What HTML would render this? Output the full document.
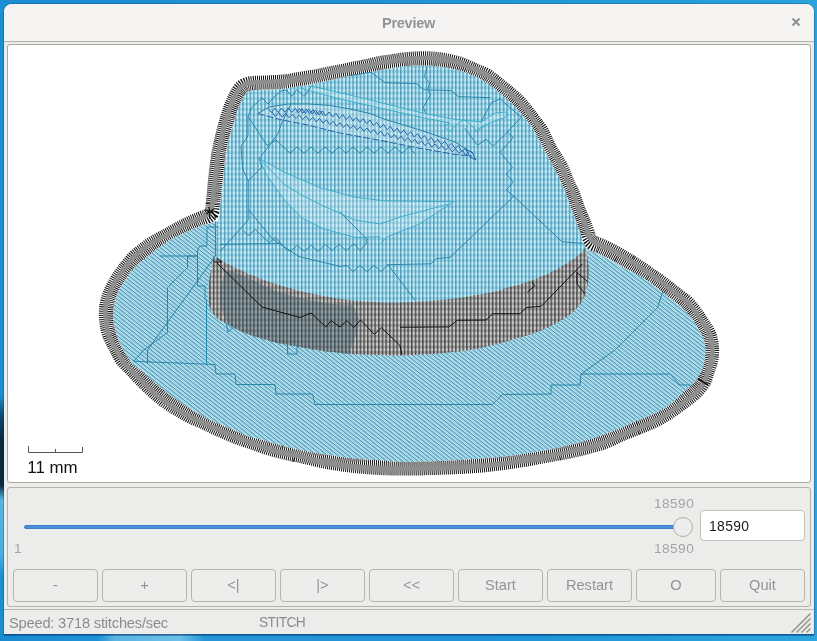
<!DOCTYPE html>
<html lang="en">
<head>
<meta charset="utf-8">
<title>Preview</title>
<style>
html,body{margin:0;padding:0;}
body{width:817px;height:641px;overflow:hidden;position:relative;background:linear-gradient(to right,#1b8dd2 0,#1f93d6 50%,#2aa2dc 100%);font-family:"Liberation Sans",sans-serif;font-size:14.6px;color:#8c8e8e;}
.abs{position:absolute;}
#deskL{left:0;top:0;width:5px;height:641px;background:linear-gradient(to bottom,#1c8fd3 0,#1c8fd3 395px,#0f4a70 415px,#0b2a40 440px,#0b2a40 485px,#56b4e0 500px,#4aaee0 555px,#1c8fd3 575px,#1c8fd3 100%);}
#deskB{left:0;top:634px;width:817px;height:7px;background:linear-gradient(to right,#1a8ad0 0,#1f92d6 12%,#58b4e2 14%,#6cc0e8 22%,#2796d8 25%,#1f93d6 60%,#2ba6df 100%);}
#deskB2{left:4px;top:634px;width:810px;height:2px;background:rgba(0,50,110,.45);}
#win{will-change:transform;left:4px;top:4px;width:810px;height:630px;background:#ececeb;border-radius:8px 8px 0 0;overflow:hidden;box-shadow:0 0 0 1px rgba(0,40,80,.25);}
#title{left:0;top:0;width:810px;height:37px;background:#f5f4f2;border-bottom:1px solid #b5b1ac;}
#title .t{position:absolute;left:0;width:809px;top:9.6px;text-align:center;font-weight:bold;font-size:14.6px;letter-spacing:-0.3px;color:#929595;line-height:18px;}
#close{position:absolute;left:786px;top:12px;width:12px;height:12px;}
#canvas{left:3px;top:40px;width:802px;height:437px;background:#fff;border:1px solid #a9a7a3;border-radius:3px;}
#panel{left:3px;top:483px;width:802px;height:118px;border:1px solid #b4b2ae;border-radius:3px;background:#ececeb;}
.btn{position:absolute;top:565px;height:31px;width:83px;border:1px solid #b6b4b0;border-radius:4px;background:#ededec;text-align:center;line-height:31px;color:#929595;font-size:14.6px;}
#track{left:20px;top:520.5px;width:660px;height:2px;background:#4a90d9;border:1px solid #3b7fc8;border-radius:3px;}
#thumb{left:669px;top:513px;width:18px;height:18px;border-radius:50%;background:#ededec;border:1px solid #aeaca8;}
.lbl{position:absolute;color:#a3a5a5;font-size:13.7px;letter-spacing:0.42px;line-height:16px;}
#entry{left:696px;top:506px;width:103px;height:29px;border:1px solid #c3c0bb;border-radius:4px;background:#fff;color:#1a1a1a;line-height:30px;font-size:13.9px;letter-spacing:0.35px;}
#entry span{position:absolute;left:8px;top:0;}
#statsep{left:0;top:605px;width:810px;height:1px;background:#b9b7b3;}
#status{left:5px;top:610px;line-height:18px;color:#8b8d8d;font-size:14.6px;letter-spacing:-0.17px;white-space:nowrap;}
#status2{left:255px;top:610px;line-height:18px;color:#8b8d8d;font-size:13.8px;letter-spacing:-0.6px;}
svg{position:absolute;left:0;top:0;}
</style>
</head>
<body>
<div id="deskL" class="abs"></div>
<div id="deskB" class="abs"></div>
<div id="deskB2" class="abs"></div>
<div id="win" class="abs">
  <div id="title" class="abs"><div class="t">Preview</div>
    <svg id="close" viewBox="0 0 12 12" width="12" height="12"><path d="M2.5,2.5 L9.5,9.5 M9.5,2.5 L2.5,9.5" stroke="#8e9090" stroke-width="2" fill="none"/></svg>
  </div>
  <div id="canvas" class="abs"></div>
  <div id="panel" class="abs"></div>
  <div id="track" class="abs"></div>
  <div id="thumb" class="abs"></div>
  <div class="lbl" style="left:650px;top:492px;">18590</div>
  <div class="lbl" style="left:650px;top:537px;">18590</div>
  <div class="lbl" style="left:10px;top:537px;">1</div>
  <div id="entry" class="abs"><span>18590</span></div>
  <div class="btn" style="left:9px;">-</div>
  <div class="btn" style="left:98px;">+</div>
  <div class="btn" style="left:187px;">&lt;|</div>
  <div class="btn" style="left:276px;">|&gt;</div>
  <div class="btn" style="left:365px;">&lt;&lt;</div>
  <div class="btn" style="left:454px;">Start</div>
  <div class="btn" style="left:543px;">Restart</div>
  <div class="btn" style="left:632px;width:78px;">O</div>
  <div class="btn" style="left:716px;">Quit</div>
  <div id="statsep" class="abs"></div>
  <div id="status" class="abs">Speed: 3718 stitches/sec</div>
  <div id="status2" class="abs">STITCH</div>
  <svg class="abs" style="left:786px;top:608px" width="22" height="22" viewBox="0 0 22 22"><path d="M1.5,20.5 L20.5,1.5 M6.5,20.5 L20.5,6.5 M11.5,20.5 L20.5,11.5 M16.5,20.5 L20.5,16.5" stroke="#8d8d8b" stroke-width="1.4" fill="none"/></svg>
</div>
<!-- embroidery drawing, page coordinates -->
<svg id="hat" width="817" height="641" viewBox="0 0 817 641">
  <defs>
    <pattern id="grid" width="3.67" height="5.4" patternUnits="userSpaceOnUse">
      <rect width="3.67" height="5.4" fill="#c8f0fb"/>
      <rect x="0" y="0" width="3.67" height="2.7" fill="#9dd7ea"/>
      <rect x="0.3" y="0" width="1.0" height="5.4" fill="#2b7a9c"/>
    </pattern>
    <pattern id="bandp" width="3.67" height="5.4" patternUnits="userSpaceOnUse">
      <rect width="3.67" height="5.4" fill="#cecece"/>
      <rect x="0" y="0" width="3.67" height="2.7" fill="#a4a4a4"/>
      <rect x="0.3" y="0" width="1.05" height="5.4" fill="#1a1a1a"/>
    </pattern>
    <pattern id="chk" width="2" height="2" patternUnits="userSpaceOnUse">
      <rect width="2" height="2" fill="#c0ecf8"/>
      <rect x="0" y="0" width="1" height="1" fill="#96cee2"/>
      <rect x="1" y="1" width="1" height="1" fill="#96cee2"/>
    </pattern>
    <pattern id="hatch" width="3.2" height="3.2" patternUnits="userSpaceOnUse" patternTransform="rotate(38)">
      <rect x="0" y="0" width="3.2" height="0.95" fill="#32789b" fill-opacity="0.75"/>
    </pattern>
    <clipPath id="ringclip"><path d="M205.0,209.0 205.1,208.5 205.2,208.1 205.3,207.4 205.4,206.5 205.6,205.1 205.8,203.0 206.1,200.2 206.4,196.7 206.8,192.7 207.2,188.4 207.6,184.1 208.0,180.0 208.4,175.9 208.9,171.5 209.4,167.1 209.9,162.8 210.5,158.7 211.0,155.0 211.5,151.7 212.1,148.7 212.7,145.9 213.3,143.3 213.9,140.7 214.5,138.0 215.1,135.3 215.8,132.7 216.4,130.1 217.1,127.6 217.8,125.0 218.5,122.5 219.2,120.0 219.9,117.4 220.6,114.9 221.4,112.4 222.2,109.9 223.0,107.5 223.9,105.1 224.8,102.7 225.8,100.3 226.8,98.0 227.7,95.8 228.8,93.8 229.8,91.8 230.8,90.0 231.8,88.2 232.9,86.6 234.0,85.1 235.0,83.8 236.0,82.6 237.0,81.6 238.0,80.8 239.0,80.0 240.1,79.4 241.2,78.8 242.5,78.2 243.8,77.7 245.2,77.2 246.7,76.9 248.3,76.5 250.0,76.2 251.9,76.0 253.9,75.9 256.0,75.8 258.2,75.7 260.4,75.7 262.5,75.6 264.6,75.5 266.6,75.4 268.7,75.3 270.8,75.2 272.9,75.1 275.0,75.0 277.1,74.9 279.2,74.7 281.4,74.6 283.5,74.4 285.7,74.2 288.0,73.9 290.4,73.5 292.8,73.1 295.3,72.6 297.8,72.1 300.2,71.7 302.5,71.2 304.7,70.9 306.8,70.6 308.9,70.3 310.9,70.0 312.9,69.7 315.0,69.3 317.1,68.9 319.2,68.4 321.2,68.0 323.3,67.5 325.4,67.0 327.5,66.6 329.6,66.2 331.7,65.8 333.8,65.4 335.8,65.1 337.9,64.7 340.0,64.3 342.1,63.9 344.2,63.4 346.2,63.0 348.3,62.5 350.4,62.0 352.5,61.6 354.6,61.2 356.7,60.8 358.8,60.4 360.8,60.0 362.9,59.6 365.0,59.2 367.1,58.7 369.2,58.2 371.2,57.7 373.3,57.2 375.4,56.7 377.5,56.2 379.6,55.9 381.7,55.6 383.8,55.3 385.8,55.0 387.9,54.7 390.0,54.4 392.1,54.1 394.2,53.7 396.2,53.4 398.3,53.1 400.4,52.8 402.5,52.5 404.6,52.3 406.7,52.1 408.8,51.9 410.8,51.7 412.9,51.6 415.0,51.5 417.1,51.4 419.2,51.3 421.2,51.2 423.3,51.2 425.4,51.2 427.5,51.2 429.6,51.3 431.7,51.4 433.8,51.6 435.8,51.8 437.9,52.0 440.0,52.2 442.1,52.5 444.2,52.8 446.2,53.2 448.3,53.5 450.4,53.9 452.5,54.4 454.6,54.9 456.6,55.4 458.7,56.0 460.8,56.6 462.9,57.3 465.0,58.1 467.2,59.0 469.5,59.9 471.8,61.0 474.1,62.0 476.4,63.0 478.5,64.0 480.6,64.9 482.5,65.6 484.5,66.4 486.4,67.2 488.2,68.0 490.0,69.0 491.7,70.1 493.4,71.2 495.0,72.5 496.6,73.7 498.2,75.0 499.8,76.3 501.4,77.6 503.1,78.9 504.7,80.2 506.3,81.5 508.0,82.9 509.6,84.2 511.3,85.6 513.0,87.0 514.6,88.4 516.3,89.8 517.9,91.2 519.4,92.5 520.8,93.8 522.0,95.0 523.2,96.2 524.4,97.4 525.6,98.6 526.8,100.0 528.1,101.5 529.4,103.1 530.7,104.8 532.0,106.4 533.3,108.1 534.6,109.8 535.9,111.4 537.1,113.1 538.4,114.8 539.6,116.4 540.8,118.0 542.0,119.6 543.1,121.0 544.1,122.3 545.1,123.6 546.2,124.9 547.2,126.5 548.3,128.4 549.5,130.8 550.7,133.5 552.0,136.5 553.3,139.4 554.6,142.2 555.8,144.7 556.9,146.8 558.1,148.6 559.2,150.2 560.2,151.8 561.3,153.4 562.3,155.0 563.3,156.7 564.3,158.3 565.3,159.9 566.3,161.5 567.2,163.2 568.1,165.0 569.0,166.9 569.8,169.0 570.6,171.1 571.4,173.3 572.2,175.3 573.0,177.2 573.8,179.1 574.6,180.8 575.4,182.5 576.1,184.1 576.8,185.6 577.5,187.0 578.1,188.2 578.5,189.2 579.0,190.0 579.4,190.9 579.9,192.0 580.4,193.4 581.0,195.1 581.6,197.1 582.3,199.2 583.0,201.5 583.8,203.7 584.6,206.0 585.5,208.3 586.5,210.6 587.5,213.0 588.6,215.4 589.6,217.8 590.5,220.0 591.4,222.2 592.2,224.5 593.1,226.7 593.8,228.7 594.5,230.5 595.0,232.0 595.3,233.1 595.5,234.0 595.6,234.6 595.6,235.0 595.6,235.3 595.6,235.6 596.7,236.1 598.3,236.7 600.1,237.4 602.2,238.2 604.2,239.1 606.2,240.0 608.2,240.9 610.3,241.9 612.4,242.9 614.5,244.0 616.7,245.1 618.8,246.2 620.8,247.4 622.9,248.6 624.9,249.8 626.9,251.0 629.0,252.3 631.0,253.5 633.0,254.7 635.0,255.9 637.0,257.2 639.0,258.4 641.0,259.7 643.0,261.0 645.0,262.3 647.0,263.7 649.0,265.1 651.0,266.5 653.0,268.0 655.0,269.4 657.1,270.8 659.1,272.2 661.2,273.6 663.3,275.1 665.4,276.6 667.5,278.1 669.6,279.7 671.7,281.3 673.8,283.0 675.8,284.7 677.9,286.4 680.0,288.1 682.1,289.7 684.3,291.3 686.5,292.9 688.6,294.5 690.6,296.1 692.5,297.8 694.2,299.5 695.8,301.4 697.3,303.2 698.7,305.0 700.0,306.8 701.2,308.4 702.3,309.9 703.3,311.3 704.1,312.6 704.9,313.9 705.7,315.1 706.5,316.4 707.3,317.6 708.1,318.8 708.9,320.0 709.7,321.1 710.5,322.3 711.2,323.5 712.0,324.7 712.8,326.0 713.6,327.3 714.3,328.6 715.0,329.9 715.6,331.2 716.1,332.7 716.6,334.1 717.1,335.6 717.4,337.0 717.8,338.5 718.1,340.0 718.4,341.5 718.6,342.9 718.8,344.4 718.9,345.8 719.0,347.3 719.1,348.8 719.1,350.2 719.1,351.7 719.1,353.1 719.0,354.6 718.9,356.0 718.8,357.5 718.5,359.0 718.3,360.4 718.0,361.9 717.7,363.3 717.3,364.8 716.9,366.2 716.5,367.7 715.9,369.1 715.4,370.6 714.9,372.0 714.3,373.5 713.8,375.0 713.2,376.6 712.8,378.2 712.3,379.8 711.8,381.4 711.2,383.0 710.5,384.5 709.7,385.9 708.8,387.3 707.9,388.7 706.9,390.0 705.9,391.3 705.0,392.5 704.1,393.6 703.2,394.7 702.3,395.7 701.4,396.7 700.4,397.6 699.4,398.6 698.3,399.6 697.1,400.6 695.8,401.6 694.5,402.6 693.2,403.5 692.0,404.5 690.8,405.4 689.8,406.2 688.7,407.1 687.5,407.9 686.2,408.9 684.7,410.0 682.9,411.3 680.9,412.8 678.7,414.4 676.4,416.0 674.2,417.6 672.0,419.0 669.9,420.3 667.7,421.6 665.6,422.9 663.5,424.1 661.5,425.2 659.6,426.2 657.8,427.1 656.2,427.9 654.7,428.5 653.1,429.2 651.6,429.8 650.0,430.5 648.4,431.2 646.9,431.8 645.3,432.4 643.7,433.0 642.0,433.7 640.0,434.5 637.8,435.4 635.3,436.4 632.7,437.4 630.0,438.4 627.4,439.5 625.0,440.5 622.8,441.5 620.6,442.6 618.6,443.6 616.6,444.6 614.6,445.6 612.5,446.5 610.6,447.3 608.8,448.0 607.0,448.7 605.1,449.4 602.8,450.2 600.0,451.0 596.6,452.0 592.6,453.1 588.3,454.2 583.8,455.4 579.3,456.5 575.0,457.5 570.8,458.4 566.7,459.2 562.5,460.0 558.3,460.7 554.2,461.5 550.0,462.2 545.8,463.0 541.7,463.8 537.5,464.6 533.3,465.4 529.2,466.2 525.0,466.9 520.8,467.6 516.7,468.2 512.5,468.8 508.3,469.4 504.2,470.0 500.0,470.5 495.8,471.0 491.7,471.5 487.5,471.9 483.3,472.4 479.2,472.8 475.0,473.1 470.8,473.4 466.7,473.6 462.5,473.9 458.3,474.0 454.2,474.2 450.0,474.4 445.8,474.6 441.7,474.7 437.5,474.9 433.3,475.0 429.2,475.1 425.0,475.2 420.8,475.4 416.7,475.4 412.5,475.5 408.3,475.6 404.2,475.6 400.0,475.6 395.8,475.5 391.7,475.5 387.5,475.3 383.3,475.2 379.2,475.0 375.0,474.8 370.8,474.5 366.7,474.2 362.5,473.8 358.3,473.4 354.2,473.0 350.0,472.5 345.8,472.0 341.7,471.4 337.5,470.8 333.3,470.2 329.2,469.5 325.0,468.8 320.7,467.9 316.2,466.9 311.7,465.8 307.4,464.8 303.4,463.9 300.0,463.1 297.2,462.5 294.9,462.1 293.0,461.7 291.2,461.4 289.4,461.0 287.5,460.6 285.4,460.1 283.3,459.6 281.2,459.1 279.2,458.6 277.1,458.1 275.0,457.5 272.9,456.9 270.8,456.3 268.8,455.7 266.7,455.1 264.6,454.4 262.5,453.8 260.4,453.0 258.3,452.3 256.2,451.5 254.2,450.8 252.1,450.0 250.0,449.2 247.9,448.5 245.8,447.8 243.8,447.2 241.7,446.5 239.6,445.7 237.5,445.0 235.4,444.2 233.3,443.4 231.2,442.6 229.2,441.7 227.1,440.9 225.0,440.0 222.9,439.1 220.8,438.2 218.8,437.3 216.7,436.4 214.6,435.5 212.5,434.5 210.4,433.5 208.3,432.5 206.2,431.5 204.2,430.5 202.1,429.5 200.0,428.5 197.9,427.6 195.8,426.7 193.8,425.8 191.7,424.9 189.6,424.0 187.5,423.0 185.4,421.9 183.4,420.9 181.3,419.7 179.3,418.5 177.2,417.3 175.0,416.0 172.7,414.6 170.4,413.2 168.0,411.7 165.6,410.2 163.3,408.6 161.0,407.0 158.8,405.4 156.8,403.8 154.7,402.1 152.7,400.4 150.6,398.6 148.5,396.7 146.3,394.6 143.9,392.4 141.6,390.2 139.3,387.9 137.1,385.7 135.0,383.6 133.1,381.7 131.4,379.8 129.7,378.1 128.1,376.3 126.6,374.7 125.0,373.0 123.5,371.4 121.9,370.0 120.5,368.6 119.0,367.1 117.6,365.5 116.2,363.8 114.9,361.7 113.7,359.5 112.4,357.2 111.3,354.8 110.1,352.5 109.0,350.3 107.9,348.2 106.8,346.2 105.8,344.2 104.8,342.3 103.9,340.5 103.1,338.8 102.5,337.1 102.0,335.7 101.6,334.3 101.2,332.9 100.9,331.5 100.6,330.0 100.3,328.4 99.9,326.7 99.7,325.0 99.4,323.3 99.2,321.6 99.0,320.0 98.9,318.5 98.8,317.0 98.7,315.6 98.7,314.2 98.7,312.8 98.8,311.2 98.9,309.7 99.0,308.0 99.2,306.3 99.4,304.6 99.7,302.9 100.0,301.2 100.4,299.6 100.8,298.0 101.3,296.3 101.8,294.7 102.4,293.0 103.1,291.2 103.8,289.4 104.7,287.6 105.6,285.7 106.5,283.8 107.5,281.9 108.5,280.0 109.5,278.2 110.5,276.5 111.6,274.7 112.7,273.0 114.0,271.1 115.5,269.0 117.2,266.7 119.2,264.1 121.3,261.4 123.5,258.7 125.6,256.2 127.5,254.0 129.3,252.2 130.9,250.6 132.5,249.3 134.1,248.0 135.7,246.7 137.5,245.3 139.4,243.8 141.5,242.2 143.6,240.6 145.7,239.1 147.9,237.6 150.0,236.2 152.1,235.0 154.2,233.9 156.2,232.8 158.3,231.8 160.4,230.8 162.5,229.7 164.6,228.5 166.7,227.3 168.8,226.1 170.8,224.9 172.9,223.7 175.0,222.6 177.1,221.5 179.2,220.4 181.2,219.3 183.3,218.3 185.4,217.3 187.5,216.3 189.7,215.3 191.9,214.3 194.2,213.4 196.4,212.5 198.4,211.7 200.0,211.0 201.3,210.5 202.4,210.0 203.3,209.7 204.0,209.4 204.5,209.2Z M218.0,221.0 218.1,219.7 218.4,217.9 218.6,215.8 218.9,213.6 219.1,211.6 219.3,210.0 219.4,209.1 219.5,208.6 219.6,208.4 219.6,207.9 219.8,206.9 220.0,205.0 220.3,202.0 220.7,198.1 221.2,193.8 221.7,189.1 222.2,184.4 222.7,180.0 223.2,175.7 223.7,171.3 224.1,166.9 224.6,162.6 225.1,158.6 225.6,155.0 226.1,152.0 226.5,149.4 226.9,147.0 227.4,144.8 227.9,142.5 228.5,140.0 229.3,137.2 230.1,134.2 231.1,131.1 232.0,128.1 232.9,125.2 233.8,122.5 234.5,120.1 235.1,117.8 235.7,115.7 236.3,113.7 236.9,111.8 237.5,110.0 238.1,108.3 238.8,106.7 239.4,105.2 240.0,103.8 240.6,102.5 241.2,101.2 241.9,100.0 242.5,98.9 243.1,97.8 243.8,96.8 244.4,95.9 245.0,95.0 245.6,94.2 246.1,93.5 246.6,92.8 247.2,92.2 247.9,91.7 248.8,91.2 249.7,90.9 250.8,90.6 252.0,90.4 253.2,90.3 254.7,90.1 256.2,90.0 258.0,89.9 260.0,89.7 262.2,89.6 264.4,89.6 266.6,89.5 268.8,89.4 270.9,89.3 273.1,89.3 275.2,89.2 277.4,89.2 279.4,89.1 281.2,89.0 282.9,88.8 284.3,88.7 285.6,88.5 286.9,88.2 288.4,88.0 290.0,87.7 291.9,87.4 293.9,87.1 296.0,86.7 298.2,86.4 300.4,86.0 302.5,85.6 304.6,85.2 306.7,84.8 308.8,84.4 310.8,83.9 312.9,83.5 315.0,83.1 317.1,82.7 319.2,82.3 321.2,81.8 323.3,81.4 325.4,81.0 327.5,80.6 329.6,80.2 331.7,79.8 333.8,79.3 335.8,78.9 337.9,78.5 340.0,78.1 342.1,77.7 344.2,77.3 346.2,76.8 348.3,76.4 350.4,76.0 352.5,75.6 354.6,75.2 356.7,74.8 358.8,74.3 360.8,73.9 362.9,73.5 365.0,73.1 367.1,72.7 369.2,72.3 371.2,71.8 373.3,71.4 375.4,71.0 377.5,70.6 379.6,70.2 381.7,69.8 383.8,69.4 385.8,69.0 387.9,68.7 390.0,68.3 392.1,68.0 394.2,67.6 396.2,67.3 398.3,67.0 400.4,66.7 402.5,66.5 404.6,66.3 406.7,66.1 408.8,65.9 410.8,65.8 412.9,65.7 415.0,65.6 417.1,65.5 419.2,65.5 421.2,65.5 423.3,65.5 425.4,65.5 427.5,65.6 429.6,65.7 431.7,65.8 433.8,65.9 435.8,66.1 437.9,66.3 440.0,66.5 442.1,66.8 444.2,67.1 446.2,67.5 448.3,67.9 450.4,68.3 452.5,68.8 454.6,69.2 456.6,69.7 458.7,70.3 460.8,70.9 462.9,71.5 465.0,72.2 467.2,73.1 469.5,73.9 471.8,74.9 474.0,75.8 476.3,76.9 478.5,78.0 480.6,79.1 482.7,80.3 484.7,81.6 486.8,82.9 488.8,84.3 491.0,85.9 493.3,87.6 495.6,89.5 498.0,91.5 500.4,93.5 502.7,95.5 505.0,97.5 507.2,99.4 509.3,101.4 511.5,103.3 513.5,105.3 515.5,107.3 517.5,109.3 519.4,111.4 521.4,113.6 523.3,115.9 525.1,118.0 526.7,120.1 528.2,122.0 529.4,123.6 530.5,125.1 531.4,126.4 532.2,127.6 533.1,129.0 534.0,130.5 535.0,132.2 536.0,133.9 536.9,135.7 537.9,137.6 538.9,139.5 540.0,141.5 541.1,143.6 542.2,145.9 543.4,148.2 544.6,150.5 545.7,152.8 546.9,155.0 548.1,157.1 549.2,159.2 550.4,161.3 551.5,163.4 552.6,165.4 553.8,167.5 554.8,169.6 555.9,171.6 556.9,173.7 558.0,175.8 559.0,177.9 560.0,180.0 561.0,182.1 562.0,184.3 563.0,186.5 564.0,188.6 564.9,190.8 565.8,193.0 566.6,195.2 567.4,197.3 568.1,199.4 568.8,201.6 569.5,203.8 570.3,206.0 571.1,208.3 572.0,210.6 573.0,213.0 573.9,215.4 574.8,217.7 575.6,220.0 576.4,222.2 577.2,224.4 577.9,226.6 578.7,228.7 579.4,230.7 580.0,232.5 580.6,234.2 581.2,235.8 581.7,237.3 582.2,238.7 582.6,240.0 583.1,241.2 583.6,242.5 584.1,243.8 584.5,244.9 585.0,246.0 585.3,246.8 585.6,247.5 585.8,247.6 585.9,247.8 586.2,247.9 586.5,248.1 586.9,248.4 587.5,248.8 588.3,249.2 589.3,249.7 590.4,250.2 591.5,250.8 592.7,251.4 593.8,251.9 594.7,252.4 595.6,252.8 596.5,253.3 597.5,253.7 598.6,254.3 600.0,255.0 601.7,255.8 603.7,256.8 605.9,257.9 608.1,259.0 610.3,260.1 612.5,261.2 614.6,262.5 616.9,263.8 619.1,265.2 621.2,266.6 623.2,267.8 625.0,268.8 626.4,269.4 627.6,269.9 628.6,270.2 629.6,270.5 630.7,270.9 632.0,271.5 633.5,272.3 635.2,273.2 636.9,274.1 638.7,275.2 640.6,276.3 642.5,277.5 644.5,278.8 646.5,280.2 648.6,281.6 650.8,283.1 652.9,284.7 655.0,286.2 657.1,287.8 659.2,289.5 661.2,291.2 663.3,292.9 665.4,294.6 667.5,296.2 669.6,297.9 671.8,299.5 674.0,301.1 676.1,302.7 678.1,304.3 680.0,305.9 681.7,307.4 683.4,309.0 684.9,310.5 686.3,312.0 687.7,313.5 689.0,315.0 690.3,316.5 691.4,318.1 692.6,319.6 693.6,321.1 694.6,322.6 695.5,324.0 696.3,325.3 697.0,326.5 697.6,327.6 698.2,328.8 698.8,330.0 699.5,331.2 700.3,332.6 701.1,334.1 701.9,335.5 702.7,337.0 703.4,338.5 704.0,340.0 704.4,341.5 704.7,342.9 704.9,344.4 705.1,345.8 705.2,347.3 705.2,348.8 705.3,350.2 705.3,351.7 705.3,353.1 705.3,354.6 705.2,356.0 705.0,357.5 704.8,359.0 704.5,360.5 704.2,362.0 703.9,363.4 703.5,364.9 703.1,366.2 702.7,367.6 702.2,368.8 701.8,370.0 701.3,371.2 700.7,372.5 700.0,373.8 699.2,375.1 698.4,376.5 697.4,378.0 696.5,379.4 695.5,380.8 694.5,382.0 693.5,383.1 692.5,384.0 691.5,384.9 690.5,385.8 689.5,386.6 688.5,387.5 687.5,388.4 686.7,389.2 685.8,390.0 684.8,390.9 683.6,391.9 682.2,393.2 680.5,394.8 678.5,396.7 676.4,398.8 674.2,400.9 672.0,402.8 670.0,404.5 668.2,405.9 666.4,407.1 664.6,408.2 662.9,409.2 661.3,410.1 659.6,411.0 658.0,411.9 656.4,412.7 654.8,413.4 653.2,414.1 651.6,414.8 650.0,415.5 648.4,416.2 646.9,416.9 645.3,417.5 643.7,418.2 642.0,419.0 640.0,419.8 637.8,420.7 635.3,421.8 632.7,422.8 630.0,423.9 627.4,425.0 625.0,426.0 622.8,427.0 620.6,427.9 618.6,428.9 616.6,429.8 614.6,430.6 612.5,431.5 610.6,432.3 608.8,433.0 607.0,433.6 605.1,434.3 602.8,435.1 600.0,436.0 596.6,437.1 592.6,438.4 588.3,439.8 583.8,441.2 579.3,442.5 575.0,443.8 570.8,444.8 566.7,445.8 562.5,446.8 558.3,447.7 554.2,448.6 550.0,449.4 545.8,450.2 541.7,451.0 537.5,451.7 533.3,452.4 529.2,453.1 525.0,453.8 520.8,454.4 516.7,454.9 512.5,455.5 508.3,456.0 504.2,456.4 500.0,456.9 495.8,457.3 491.7,457.7 487.5,458.0 483.3,458.4 479.2,458.7 475.0,459.0 470.8,459.3 466.7,459.6 462.5,459.9 458.3,460.1 454.2,460.4 450.0,460.6 445.8,460.8 441.7,461.0 437.5,461.1 433.3,461.3 429.2,461.4 425.0,461.5 420.8,461.6 416.7,461.8 412.5,461.9 408.3,462.0 404.2,462.0 400.0,461.9 395.8,461.7 391.7,461.4 387.5,461.1 383.3,460.7 379.2,460.3 375.0,460.0 370.8,459.7 366.7,459.4 362.5,459.2 358.3,458.9 354.2,458.5 350.0,458.1 345.8,457.6 341.7,457.0 337.5,456.4 333.3,455.8 329.2,455.1 325.0,454.4 320.7,453.7 316.2,452.9 311.7,452.2 307.4,451.4 303.4,450.7 300.0,450.0 297.2,449.4 294.9,448.9 293.0,448.4 291.2,447.9 289.4,447.4 287.5,446.9 285.4,446.4 283.3,445.9 281.2,445.4 279.2,444.8 277.1,444.3 275.0,443.8 272.9,443.2 270.8,442.5 268.8,441.9 266.7,441.2 264.6,440.6 262.5,440.0 260.4,439.5 258.3,439.0 256.2,438.5 254.2,438.0 252.1,437.4 250.0,436.8 247.9,436.1 245.8,435.3 243.8,434.4 241.7,433.6 239.6,432.7 237.5,431.8 235.4,430.9 233.3,430.1 231.2,429.2 229.2,428.3 227.1,427.4 225.0,426.5 222.9,425.6 220.8,424.7 218.8,423.8 216.7,422.9 214.6,422.0 212.5,421.0 210.4,420.0 208.3,418.9 206.2,417.8 204.2,416.7 202.1,415.6 200.0,414.5 197.9,413.4 195.8,412.3 193.8,411.2 191.7,410.0 189.6,408.8 187.5,407.5 185.4,406.1 183.4,404.7 181.3,403.3 179.3,401.8 177.2,400.2 175.0,398.6 172.7,396.9 170.4,395.2 168.0,393.4 165.6,391.6 163.3,389.8 161.0,388.0 158.8,386.2 156.5,384.3 154.4,382.4 152.3,380.6 150.3,378.9 148.5,377.3 146.9,375.9 145.6,374.5 144.3,373.3 143.2,372.1 142.0,371.0 140.8,370.0 139.5,369.1 138.3,368.4 137.1,367.8 135.8,367.1 134.5,366.2 133.2,365.0 131.8,363.3 130.2,361.2 128.7,358.9 127.2,356.6 125.8,354.4 124.6,352.5 123.7,351.0 122.9,349.7 122.2,348.5 121.7,347.4 121.1,346.3 120.5,345.0 119.9,343.6 119.2,342.2 118.6,340.8 118.0,339.3 117.4,337.8 116.9,336.2 116.4,334.6 115.9,333.0 115.5,331.2 115.1,329.5 114.7,327.9 114.4,326.2 114.1,324.7 113.8,323.2 113.6,321.8 113.4,320.4 113.2,318.9 113.1,317.5 113.0,316.1 113.0,314.6 113.1,313.2 113.2,311.8 113.3,310.3 113.5,308.8 113.7,307.2 114.0,305.5 114.3,303.8 114.7,302.1 115.1,300.4 115.6,298.8 116.1,297.1 116.6,295.4 117.2,293.7 117.9,292.1 118.6,290.4 119.4,288.8 120.4,287.1 121.5,285.4 122.7,283.7 123.9,282.0 125.0,280.4 126.0,279.0 126.8,277.8 127.4,276.7 127.9,275.7 128.4,274.7 129.1,273.7 130.0,272.5 131.1,271.2 132.3,269.9 133.7,268.4 135.1,267.0 136.7,265.5 138.3,264.0 140.0,262.5 141.9,260.9 143.9,259.3 145.9,257.7 148.0,256.1 150.0,254.5 152.0,252.9 154.1,251.2 156.2,249.5 158.3,247.9 160.4,246.3 162.5,244.8 164.6,243.4 166.7,242.1 168.8,240.8 170.8,239.6 172.9,238.4 175.0,237.3 177.1,236.2 179.2,235.3 181.2,234.3 183.3,233.4 185.4,232.5 187.5,231.6 189.6,230.6 191.8,229.6 193.9,228.6 196.0,227.7 198.1,226.8 200.0,226.0 201.8,225.3 203.6,224.8 205.3,224.3 206.9,223.8 208.5,223.4 210.0,223.0 211.5,222.6 213.1,222.2 214.6,221.8 216.0,221.5 217.2,221.2Z" clip-rule="evenodd"/></clipPath>
    <clipPath id="cv"><rect x="8" y="45" width="802" height="437"/></clipPath>
  </defs>
  <g clip-path="url(#cv)">
    <path d="M585.6,247.5 585.8,247.6 585.9,247.8 586.2,247.9 586.5,248.1 586.9,248.4 587.5,248.8 588.3,249.2 589.3,249.7 590.4,250.2 591.5,250.8 592.7,251.4 593.8,251.9 594.7,252.4 595.6,252.8 596.5,253.3 597.5,253.7 598.6,254.3 600.0,255.0 601.7,255.8 603.7,256.8 605.9,257.9 608.1,259.0 610.3,260.1 612.5,261.2 614.6,262.5 616.9,263.8 619.1,265.2 621.2,266.6 623.2,267.8 625.0,268.8 626.4,269.4 627.6,269.9 628.6,270.2 629.6,270.5 630.7,270.9 632.0,271.5 633.5,272.3 635.2,273.2 636.9,274.1 638.7,275.2 640.6,276.3 642.5,277.5 644.5,278.8 646.5,280.2 648.6,281.6 650.8,283.1 652.9,284.7 655.0,286.2 657.1,287.8 659.2,289.5 661.2,291.2 663.3,292.9 665.4,294.6 667.5,296.2 669.6,297.9 671.8,299.5 674.0,301.1 676.1,302.7 678.1,304.3 680.0,305.9 681.7,307.4 683.4,309.0 684.9,310.5 686.3,312.0 687.7,313.5 689.0,315.0 690.3,316.5 691.4,318.1 692.6,319.6 693.6,321.1 694.6,322.6 695.5,324.0 696.3,325.3 697.0,326.5 697.6,327.6 698.2,328.8 698.8,330.0 699.5,331.2 700.3,332.6 701.1,334.1 701.9,335.5 702.7,337.0 703.4,338.5 704.0,340.0 704.4,341.5 704.7,342.9 704.9,344.4 705.1,345.8 705.2,347.3 705.2,348.8 705.3,350.2 705.3,351.7 705.3,353.1 705.3,354.6 705.2,356.0 705.0,357.5 704.8,359.0 704.5,360.5 704.2,362.0 703.9,363.4 703.5,364.9 703.1,366.2 702.7,367.6 702.2,368.8 701.8,370.0 701.3,371.2 700.7,372.5 700.0,373.8 699.2,375.1 698.4,376.5 697.4,378.0 696.5,379.4 695.5,380.8 694.5,382.0 693.5,383.1 692.5,384.0 691.5,384.9 690.5,385.8 689.5,386.6 688.5,387.5 687.5,388.4 686.7,389.2 685.8,390.0 684.8,390.9 683.6,391.9 682.2,393.2 680.5,394.8 678.5,396.7 676.4,398.8 674.2,400.9 672.0,402.8 670.0,404.5 668.2,405.9 666.4,407.1 664.6,408.2 662.9,409.2 661.3,410.1 659.6,411.0 658.0,411.9 656.4,412.7 654.8,413.4 653.2,414.1 651.6,414.8 650.0,415.5 648.4,416.2 646.9,416.9 645.3,417.5 643.7,418.2 642.0,419.0 640.0,419.8 637.8,420.7 635.3,421.8 632.7,422.8 630.0,423.9 627.4,425.0 625.0,426.0 622.8,427.0 620.6,427.9 618.6,428.9 616.6,429.8 614.6,430.6 612.5,431.5 610.6,432.3 608.8,433.0 607.0,433.6 605.1,434.3 602.8,435.1 600.0,436.0 596.6,437.1 592.6,438.4 588.3,439.8 583.8,441.2 579.3,442.5 575.0,443.8 570.8,444.8 566.7,445.8 562.5,446.8 558.3,447.7 554.2,448.6 550.0,449.4 545.8,450.2 541.7,451.0 537.5,451.7 533.3,452.4 529.2,453.1 525.0,453.8 520.8,454.4 516.7,454.9 512.5,455.5 508.3,456.0 504.2,456.4 500.0,456.9 495.8,457.3 491.7,457.7 487.5,458.0 483.3,458.4 479.2,458.7 475.0,459.0 470.8,459.3 466.7,459.6 462.5,459.9 458.3,460.1 454.2,460.4 450.0,460.6 445.8,460.8 441.7,461.0 437.5,461.1 433.3,461.3 429.2,461.4 425.0,461.5 420.8,461.6 416.7,461.8 412.5,461.9 408.3,462.0 404.2,462.0 400.0,461.9 395.8,461.7 391.7,461.4 387.5,461.1 383.3,460.7 379.2,460.3 375.0,460.0 370.8,459.7 366.7,459.4 362.5,459.2 358.3,458.9 354.2,458.5 350.0,458.1 345.8,457.6 341.7,457.0 337.5,456.4 333.3,455.8 329.2,455.1 325.0,454.4 320.7,453.7 316.2,452.9 311.7,452.2 307.4,451.4 303.4,450.7 300.0,450.0 297.2,449.4 294.9,448.9 293.0,448.4 291.2,447.9 289.4,447.4 287.5,446.9 285.4,446.4 283.3,445.9 281.2,445.4 279.2,444.8 277.1,444.3 275.0,443.8 272.9,443.2 270.8,442.5 268.8,441.9 266.7,441.2 264.6,440.6 262.5,440.0 260.4,439.5 258.3,439.0 256.2,438.5 254.2,438.0 252.1,437.4 250.0,436.8 247.9,436.1 245.8,435.3 243.8,434.4 241.7,433.6 239.6,432.7 237.5,431.8 235.4,430.9 233.3,430.1 231.2,429.2 229.2,428.3 227.1,427.4 225.0,426.5 222.9,425.6 220.8,424.7 218.8,423.8 216.7,422.9 214.6,422.0 212.5,421.0 210.4,420.0 208.3,418.9 206.2,417.8 204.2,416.7 202.1,415.6 200.0,414.5 197.9,413.4 195.8,412.3 193.8,411.2 191.7,410.0 189.6,408.8 187.5,407.5 185.4,406.1 183.4,404.7 181.3,403.3 179.3,401.8 177.2,400.2 175.0,398.6 172.7,396.9 170.4,395.2 168.0,393.4 165.6,391.6 163.3,389.8 161.0,388.0 158.8,386.2 156.5,384.3 154.4,382.4 152.3,380.6 150.3,378.9 148.5,377.3 146.9,375.9 145.6,374.5 144.3,373.3 143.2,372.1 142.0,371.0 140.8,370.0 139.5,369.1 138.3,368.4 137.1,367.8 135.8,367.1 134.5,366.2 133.2,365.0 131.8,363.3 130.2,361.2 128.7,358.9 127.2,356.6 125.8,354.4 124.6,352.5 123.7,351.0 122.9,349.7 122.2,348.5 121.7,347.4 121.1,346.3 120.5,345.0 119.9,343.6 119.2,342.2 118.6,340.8 118.0,339.3 117.4,337.8 116.9,336.2 116.4,334.6 115.9,333.0 115.5,331.2 115.1,329.5 114.7,327.9 114.4,326.2 114.1,324.7 113.8,323.2 113.6,321.8 113.4,320.4 113.2,318.9 113.1,317.5 113.0,316.1 113.0,314.6 113.1,313.2 113.2,311.8 113.3,310.3 113.5,308.8 113.7,307.2 114.0,305.5 114.3,303.8 114.7,302.1 115.1,300.4 115.6,298.8 116.1,297.1 116.6,295.4 117.2,293.7 117.9,292.1 118.6,290.4 119.4,288.8 120.4,287.1 121.5,285.4 122.7,283.7 123.9,282.0 125.0,280.4 126.0,279.0 126.8,277.8 127.4,276.7 127.9,275.7 128.4,274.7 129.1,273.7 130.0,272.5 131.1,271.2 132.3,269.9 133.7,268.4 135.1,267.0 136.7,265.5 138.3,264.0 140.0,262.5 141.9,260.9 143.9,259.3 145.9,257.7 148.0,256.1 150.0,254.5 152.0,252.9 154.1,251.2 156.2,249.5 158.3,247.9 160.4,246.3 162.5,244.8 164.6,243.4 166.7,242.1 168.8,240.8 170.8,239.6 172.9,238.4 175.0,237.3 177.1,236.2 179.2,235.3 181.2,234.3 183.3,233.4 185.4,232.5 187.5,231.6 189.6,230.6 191.8,229.6 193.9,228.6 196.0,227.7 198.1,226.8 200.0,226.0 201.8,225.3 203.6,224.8 205.3,224.3 206.9,223.8 208.5,223.4 210.0,223.0 211.5,222.6 213.1,222.2 214.6,221.8 216.0,221.5 217.2,221.2 218.0,221.0Z" fill="url(#chk)"/>
    <path d="M585.6,247.5 585.8,247.6 585.9,247.8 586.2,247.9 586.5,248.1 586.9,248.4 587.5,248.8 588.3,249.2 589.3,249.7 590.4,250.2 591.5,250.8 592.7,251.4 593.8,251.9 594.7,252.4 595.6,252.8 596.5,253.3 597.5,253.7 598.6,254.3 600.0,255.0 601.7,255.8 603.7,256.8 605.9,257.9 608.1,259.0 610.3,260.1 612.5,261.2 614.6,262.5 616.9,263.8 619.1,265.2 621.2,266.6 623.2,267.8 625.0,268.8 626.4,269.4 627.6,269.9 628.6,270.2 629.6,270.5 630.7,270.9 632.0,271.5 633.5,272.3 635.2,273.2 636.9,274.1 638.7,275.2 640.6,276.3 642.5,277.5 644.5,278.8 646.5,280.2 648.6,281.6 650.8,283.1 652.9,284.7 655.0,286.2 657.1,287.8 659.2,289.5 661.2,291.2 663.3,292.9 665.4,294.6 667.5,296.2 669.6,297.9 671.8,299.5 674.0,301.1 676.1,302.7 678.1,304.3 680.0,305.9 681.7,307.4 683.4,309.0 684.9,310.5 686.3,312.0 687.7,313.5 689.0,315.0 690.3,316.5 691.4,318.1 692.6,319.6 693.6,321.1 694.6,322.6 695.5,324.0 696.3,325.3 697.0,326.5 697.6,327.6 698.2,328.8 698.8,330.0 699.5,331.2 700.3,332.6 701.1,334.1 701.9,335.5 702.7,337.0 703.4,338.5 704.0,340.0 704.4,341.5 704.7,342.9 704.9,344.4 705.1,345.8 705.2,347.3 705.2,348.8 705.3,350.2 705.3,351.7 705.3,353.1 705.3,354.6 705.2,356.0 705.0,357.5 704.8,359.0 704.5,360.5 704.2,362.0 703.9,363.4 703.5,364.9 703.1,366.2 702.7,367.6 702.2,368.8 701.8,370.0 701.3,371.2 700.7,372.5 700.0,373.8 699.2,375.1 698.4,376.5 697.4,378.0 696.5,379.4 695.5,380.8 694.5,382.0 693.5,383.1 692.5,384.0 691.5,384.9 690.5,385.8 689.5,386.6 688.5,387.5 687.5,388.4 686.7,389.2 685.8,390.0 684.8,390.9 683.6,391.9 682.2,393.2 680.5,394.8 678.5,396.7 676.4,398.8 674.2,400.9 672.0,402.8 670.0,404.5 668.2,405.9 666.4,407.1 664.6,408.2 662.9,409.2 661.3,410.1 659.6,411.0 658.0,411.9 656.4,412.7 654.8,413.4 653.2,414.1 651.6,414.8 650.0,415.5 648.4,416.2 646.9,416.9 645.3,417.5 643.7,418.2 642.0,419.0 640.0,419.8 637.8,420.7 635.3,421.8 632.7,422.8 630.0,423.9 627.4,425.0 625.0,426.0 622.8,427.0 620.6,427.9 618.6,428.9 616.6,429.8 614.6,430.6 612.5,431.5 610.6,432.3 608.8,433.0 607.0,433.6 605.1,434.3 602.8,435.1 600.0,436.0 596.6,437.1 592.6,438.4 588.3,439.8 583.8,441.2 579.3,442.5 575.0,443.8 570.8,444.8 566.7,445.8 562.5,446.8 558.3,447.7 554.2,448.6 550.0,449.4 545.8,450.2 541.7,451.0 537.5,451.7 533.3,452.4 529.2,453.1 525.0,453.8 520.8,454.4 516.7,454.9 512.5,455.5 508.3,456.0 504.2,456.4 500.0,456.9 495.8,457.3 491.7,457.7 487.5,458.0 483.3,458.4 479.2,458.7 475.0,459.0 470.8,459.3 466.7,459.6 462.5,459.9 458.3,460.1 454.2,460.4 450.0,460.6 445.8,460.8 441.7,461.0 437.5,461.1 433.3,461.3 429.2,461.4 425.0,461.5 420.8,461.6 416.7,461.8 412.5,461.9 408.3,462.0 404.2,462.0 400.0,461.9 395.8,461.7 391.7,461.4 387.5,461.1 383.3,460.7 379.2,460.3 375.0,460.0 370.8,459.7 366.7,459.4 362.5,459.2 358.3,458.9 354.2,458.5 350.0,458.1 345.8,457.6 341.7,457.0 337.5,456.4 333.3,455.8 329.2,455.1 325.0,454.4 320.7,453.7 316.2,452.9 311.7,452.2 307.4,451.4 303.4,450.7 300.0,450.0 297.2,449.4 294.9,448.9 293.0,448.4 291.2,447.9 289.4,447.4 287.5,446.9 285.4,446.4 283.3,445.9 281.2,445.4 279.2,444.8 277.1,444.3 275.0,443.8 272.9,443.2 270.8,442.5 268.8,441.9 266.7,441.2 264.6,440.6 262.5,440.0 260.4,439.5 258.3,439.0 256.2,438.5 254.2,438.0 252.1,437.4 250.0,436.8 247.9,436.1 245.8,435.3 243.8,434.4 241.7,433.6 239.6,432.7 237.5,431.8 235.4,430.9 233.3,430.1 231.2,429.2 229.2,428.3 227.1,427.4 225.0,426.5 222.9,425.6 220.8,424.7 218.8,423.8 216.7,422.9 214.6,422.0 212.5,421.0 210.4,420.0 208.3,418.9 206.2,417.8 204.2,416.7 202.1,415.6 200.0,414.5 197.9,413.4 195.8,412.3 193.8,411.2 191.7,410.0 189.6,408.8 187.5,407.5 185.4,406.1 183.4,404.7 181.3,403.3 179.3,401.8 177.2,400.2 175.0,398.6 172.7,396.9 170.4,395.2 168.0,393.4 165.6,391.6 163.3,389.8 161.0,388.0 158.8,386.2 156.5,384.3 154.4,382.4 152.3,380.6 150.3,378.9 148.5,377.3 146.9,375.9 145.6,374.5 144.3,373.3 143.2,372.1 142.0,371.0 140.8,370.0 139.5,369.1 138.3,368.4 137.1,367.8 135.8,367.1 134.5,366.2 133.2,365.0 131.8,363.3 130.2,361.2 128.7,358.9 127.2,356.6 125.8,354.4 124.6,352.5 123.7,351.0 122.9,349.7 122.2,348.5 121.7,347.4 121.1,346.3 120.5,345.0 119.9,343.6 119.2,342.2 118.6,340.8 118.0,339.3 117.4,337.8 116.9,336.2 116.4,334.6 115.9,333.0 115.5,331.2 115.1,329.5 114.7,327.9 114.4,326.2 114.1,324.7 113.8,323.2 113.6,321.8 113.4,320.4 113.2,318.9 113.1,317.5 113.0,316.1 113.0,314.6 113.1,313.2 113.2,311.8 113.3,310.3 113.5,308.8 113.7,307.2 114.0,305.5 114.3,303.8 114.7,302.1 115.1,300.4 115.6,298.8 116.1,297.1 116.6,295.4 117.2,293.7 117.9,292.1 118.6,290.4 119.4,288.8 120.4,287.1 121.5,285.4 122.7,283.7 123.9,282.0 125.0,280.4 126.0,279.0 126.8,277.8 127.4,276.7 127.9,275.7 128.4,274.7 129.1,273.7 130.0,272.5 131.1,271.2 132.3,269.9 133.7,268.4 135.1,267.0 136.7,265.5 138.3,264.0 140.0,262.5 141.9,260.9 143.9,259.3 145.9,257.7 148.0,256.1 150.0,254.5 152.0,252.9 154.1,251.2 156.2,249.5 158.3,247.9 160.4,246.3 162.5,244.8 164.6,243.4 166.7,242.1 168.8,240.8 170.8,239.6 172.9,238.4 175.0,237.3 177.1,236.2 179.2,235.3 181.2,234.3 183.3,233.4 185.4,232.5 187.5,231.6 189.6,230.6 191.8,229.6 193.9,228.6 196.0,227.7 198.1,226.8 200.0,226.0 201.8,225.3 203.6,224.8 205.3,224.3 206.9,223.8 208.5,223.4 210.0,223.0 211.5,222.6 213.1,222.2 214.6,221.8 216.0,221.5 217.2,221.2 218.0,221.0Z" fill="url(#hatch)"/>
    <path d="M218.0,221.0 218.1,219.7 218.4,217.9 218.6,215.8 218.9,213.6 219.1,211.6 219.3,210.0 219.4,209.1 219.5,208.6 219.6,208.4 219.6,207.9 219.8,206.9 220.0,205.0 220.3,202.0 220.7,198.1 221.2,193.8 221.7,189.1 222.2,184.4 222.7,180.0 223.2,175.7 223.7,171.3 224.1,166.9 224.6,162.6 225.1,158.6 225.6,155.0 226.1,152.0 226.5,149.4 226.9,147.0 227.4,144.8 227.9,142.5 228.5,140.0 229.3,137.2 230.1,134.2 231.1,131.1 232.0,128.1 232.9,125.2 233.8,122.5 234.5,120.1 235.1,117.8 235.7,115.7 236.3,113.7 236.9,111.8 237.5,110.0 238.1,108.3 238.8,106.7 239.4,105.2 240.0,103.8 240.6,102.5 241.2,101.2 241.9,100.0 242.5,98.9 243.1,97.8 243.8,96.8 244.4,95.9 245.0,95.0 245.6,94.2 246.1,93.5 246.6,92.8 247.2,92.2 247.9,91.7 248.8,91.2 249.7,90.9 250.8,90.6 252.0,90.4 253.2,90.3 254.7,90.1 256.2,90.0 258.0,89.9 260.0,89.7 262.2,89.6 264.4,89.6 266.6,89.5 268.8,89.4 270.9,89.3 273.1,89.3 275.2,89.2 277.4,89.2 279.4,89.1 281.2,89.0 282.9,88.8 284.3,88.7 285.6,88.5 286.9,88.2 288.4,88.0 290.0,87.7 291.9,87.4 293.9,87.1 296.0,86.7 298.2,86.4 300.4,86.0 302.5,85.6 304.6,85.2 306.7,84.8 308.8,84.4 310.8,83.9 312.9,83.5 315.0,83.1 317.1,82.7 319.2,82.3 321.2,81.8 323.3,81.4 325.4,81.0 327.5,80.6 329.6,80.2 331.7,79.8 333.8,79.3 335.8,78.9 337.9,78.5 340.0,78.1 342.1,77.7 344.2,77.3 346.2,76.8 348.3,76.4 350.4,76.0 352.5,75.6 354.6,75.2 356.7,74.8 358.8,74.3 360.8,73.9 362.9,73.5 365.0,73.1 367.1,72.7 369.2,72.3 371.2,71.8 373.3,71.4 375.4,71.0 377.5,70.6 379.6,70.2 381.7,69.8 383.8,69.4 385.8,69.0 387.9,68.7 390.0,68.3 392.1,68.0 394.2,67.6 396.2,67.3 398.3,67.0 400.4,66.7 402.5,66.5 404.6,66.3 406.7,66.1 408.8,65.9 410.8,65.8 412.9,65.7 415.0,65.6 417.1,65.5 419.2,65.5 421.2,65.5 423.3,65.5 425.4,65.5 427.5,65.6 429.6,65.7 431.7,65.8 433.8,65.9 435.8,66.1 437.9,66.3 440.0,66.5 442.1,66.8 444.2,67.1 446.2,67.5 448.3,67.9 450.4,68.3 452.5,68.8 454.6,69.2 456.6,69.7 458.7,70.3 460.8,70.9 462.9,71.5 465.0,72.2 467.2,73.1 469.5,73.9 471.8,74.9 474.0,75.8 476.3,76.9 478.5,78.0 480.6,79.1 482.7,80.3 484.7,81.6 486.8,82.9 488.8,84.3 491.0,85.9 493.3,87.6 495.6,89.5 498.0,91.5 500.4,93.5 502.7,95.5 505.0,97.5 507.2,99.4 509.3,101.4 511.5,103.3 513.5,105.3 515.5,107.3 517.5,109.3 519.4,111.4 521.4,113.6 523.3,115.9 525.1,118.0 526.7,120.1 528.2,122.0 529.4,123.6 530.5,125.1 531.4,126.4 532.2,127.6 533.1,129.0 534.0,130.5 535.0,132.2 536.0,133.9 536.9,135.7 537.9,137.6 538.9,139.5 540.0,141.5 541.1,143.6 542.2,145.9 543.4,148.2 544.6,150.5 545.7,152.8 546.9,155.0 548.1,157.1 549.2,159.2 550.4,161.3 551.5,163.4 552.6,165.4 553.8,167.5 554.8,169.6 555.9,171.6 556.9,173.7 558.0,175.8 559.0,177.9 560.0,180.0 561.0,182.1 562.0,184.3 563.0,186.5 564.0,188.6 564.9,190.8 565.8,193.0 566.6,195.2 567.4,197.3 568.1,199.4 568.8,201.6 569.5,203.8 570.3,206.0 571.1,208.3 572.0,210.6 573.0,213.0 573.9,215.4 574.8,217.7 575.6,220.0 576.4,222.2 577.2,224.4 577.9,226.6 578.7,228.7 579.4,230.7 580.0,232.5 580.6,234.2 581.2,235.8 581.7,237.3 582.2,238.7 582.6,240.0 583.1,241.2 583.6,242.5 584.1,243.8 584.5,244.9 585.0,246.0 585.3,246.8 585.6,247.5 585.9,249.2 586.3,251.5 586.8,254.2 587.3,257.1 587.7,260.0 588.0,262.5 588.2,264.8 588.4,266.9 588.5,269.1 588.5,271.1 588.5,273.1 588.5,275.0 588.4,276.8 588.3,278.5 588.2,280.2 588.0,281.8 587.8,283.4 587.5,285.0 587.2,286.7 586.8,288.4 586.4,290.2 586.0,291.9 585.5,293.5 585.0,295.0 584.5,296.4 583.9,297.7 583.4,298.9 582.7,300.1 582.0,301.3 581.2,302.5 580.4,303.8 579.4,305.0 578.4,306.3 577.3,307.6 576.1,308.8 575.0,310.0 573.9,311.1 572.7,312.2 571.5,313.2 570.2,314.2 568.9,315.2 567.5,316.2 566.0,317.3 564.4,318.3 562.8,319.4 561.1,320.4 559.3,321.5 557.5,322.5 555.6,323.6 553.5,324.6 551.4,325.7 549.3,326.8 547.1,327.8 545.0,328.8 542.9,329.7 540.8,330.6 538.8,331.4 536.7,332.2 534.6,333.0 532.5,333.8 530.4,334.4 528.3,335.1 526.2,335.7 524.2,336.3 522.1,336.9 520.0,337.5 517.9,338.1 515.8,338.8 513.8,339.4 511.7,340.0 509.6,340.7 507.5,341.2 505.4,341.8 503.3,342.3 501.2,342.9 499.2,343.4 497.1,343.9 495.0,344.4 492.9,344.9 490.8,345.5 488.8,346.0 486.7,346.5 484.6,347.0 482.5,347.5 480.4,348.0 478.1,348.4 475.9,348.9 473.8,349.3 471.8,349.7 470.0,350.0 468.5,350.3 467.3,350.4 466.2,350.6 465.2,350.7 464.0,350.8 462.5,351.0 460.7,351.2 458.7,351.4 456.6,351.6 454.4,351.8 452.1,352.0 450.0,352.2 447.9,352.5 445.8,352.7 443.8,352.9 441.7,353.1 439.6,353.3 437.5,353.5 435.4,353.7 433.3,353.8 431.2,354.0 429.2,354.1 427.1,354.3 425.0,354.4 422.9,354.5 420.8,354.6 418.8,354.7 416.7,354.8 414.6,354.9 412.5,355.0 410.6,355.1 408.8,355.2 407.0,355.3 405.1,355.4 402.8,355.5 400.0,355.5 396.4,355.5 392.1,355.4 387.5,355.3 382.9,355.2 378.6,355.1 375.0,355.0 372.2,354.9 369.9,354.9 368.0,354.8 366.2,354.8 364.4,354.7 362.5,354.6 360.4,354.5 358.3,354.4 356.2,354.2 354.2,354.1 352.1,353.9 350.0,353.8 347.9,353.6 345.8,353.4 343.8,353.1 341.7,352.9 339.6,352.7 337.5,352.5 335.4,352.3 333.3,352.1 331.2,351.9 329.2,351.7 327.1,351.5 325.0,351.2 322.9,351.0 320.8,350.7 318.8,350.4 316.7,350.1 314.6,349.8 312.5,349.4 310.5,349.0 308.6,348.6 306.6,348.2 304.6,347.8 302.4,347.4 300.0,346.9 297.2,346.4 294.0,345.9 290.6,345.4 287.3,344.8 284.1,344.3 281.2,343.8 278.8,343.2 276.6,342.7 274.6,342.2 272.7,341.7 270.8,341.2 268.8,340.6 266.7,340.0 264.6,339.4 262.5,338.8 260.4,338.2 258.3,337.6 256.2,336.9 254.2,336.2 252.1,335.6 250.0,334.9 247.9,334.1 245.8,333.3 243.8,332.5 241.7,331.6 239.6,330.6 237.5,329.5 235.4,328.4 233.3,327.3 231.2,326.2 229.1,325.2 226.9,324.1 224.7,322.9 222.5,321.8 220.5,320.6 218.8,319.4 217.2,318.2 215.8,316.9 214.5,315.6 213.4,314.2 212.4,312.9 211.5,311.5 210.8,310.1 210.2,308.8 209.8,307.4 209.5,306.0 209.3,304.5 209.0,303.0 208.8,301.4 208.6,299.7 208.4,298.0 208.3,296.2 208.3,294.4 208.3,292.5 208.4,290.5 208.5,288.5 208.7,286.4 208.9,284.2 209.2,282.1 209.4,280.0 209.7,277.9 209.9,275.8 210.2,273.7 210.6,271.6 210.9,269.5 211.2,267.5 211.7,265.4 212.1,263.2 212.6,261.1 213.1,259.1 213.5,257.5 213.8,256.2 214.0,255.0 214.4,253.3 214.8,251.2 215.3,249.1 215.7,246.9 216.0,245.0 216.2,243.3 216.4,241.7 216.6,240.2 216.7,238.6 216.8,236.9 217.0,235.0 217.2,232.7 217.4,230.1 217.6,227.4 217.7,224.8 217.9,222.6Z" fill="url(#grid)"/>
    <path d="M213.8,256.2 215.0,256.9 216.6,257.9 218.6,259.0 220.7,260.2 222.9,261.4 225.0,262.5 227.0,263.5 229.1,264.6 231.2,265.7 233.3,266.7 235.4,267.7 237.5,268.8 239.6,269.7 241.7,270.7 243.8,271.7 245.8,272.6 247.9,273.5 250.0,274.4 252.1,275.3 254.2,276.1 256.2,277.0 258.3,277.8 260.4,278.6 262.5,279.4 264.6,280.2 266.7,280.9 268.8,281.7 270.8,282.4 272.9,283.1 275.0,283.8 277.1,284.4 279.2,285.1 281.2,285.7 283.3,286.3 285.4,286.9 287.5,287.5 289.6,288.1 291.7,288.7 293.8,289.3 295.8,289.9 297.9,290.5 300.0,291.0 302.1,291.5 304.2,292.0 306.2,292.4 308.3,292.9 310.4,293.3 312.5,293.8 314.6,294.2 316.7,294.6 318.8,295.0 320.8,295.4 322.9,295.9 325.0,296.2 327.1,296.6 329.2,297.0 331.2,297.4 333.3,297.8 335.4,298.2 337.5,298.5 339.6,298.8 341.7,299.1 343.8,299.3 345.8,299.5 347.9,299.8 350.0,300.0 352.1,300.2 354.2,300.5 356.2,300.7 358.3,300.9 360.4,301.1 362.5,301.2 364.6,301.4 366.7,301.5 368.8,301.6 370.8,301.7 372.9,301.8 375.0,301.9 377.1,302.0 379.2,302.1 381.2,302.2 383.3,302.4 385.4,302.4 387.5,302.5 389.6,302.5 391.7,302.5 393.8,302.5 395.8,302.5 397.9,302.4 400.0,302.4 402.1,302.3 404.2,302.3 406.2,302.2 408.3,302.1 410.4,302.0 412.5,301.9 414.6,301.8 416.7,301.7 418.8,301.6 420.8,301.5 422.9,301.4 425.0,301.2 427.1,301.1 429.2,301.0 431.2,300.8 433.3,300.6 435.4,300.4 437.5,300.2 439.6,300.1 441.7,299.9 443.8,299.7 445.8,299.4 447.9,299.2 450.0,299.0 452.1,298.8 454.2,298.5 456.2,298.3 458.3,298.1 460.4,297.8 462.5,297.5 464.6,297.2 466.7,296.8 468.8,296.4 470.8,296.0 472.9,295.6 475.0,295.2 477.1,294.9 479.3,294.5 481.4,294.2 483.5,293.8 485.6,293.5 487.5,293.1 489.3,292.8 491.0,292.4 492.7,292.1 494.3,291.8 495.9,291.4 497.5,291.0 499.1,290.5 500.7,289.9 502.3,289.3 504.0,288.7 505.7,288.1 507.5,287.5 509.4,287.0 511.5,286.5 513.6,286.0 515.7,285.5 517.9,285.0 520.0,284.4 522.1,283.7 524.2,283.1 526.2,282.3 528.3,281.6 530.4,280.8 532.5,280.0 534.6,279.2 536.7,278.4 538.8,277.6 540.8,276.8 542.9,275.9 545.0,275.0 547.1,274.0 549.2,273.1 551.2,272.0 553.3,271.0 555.4,269.9 557.5,268.8 559.6,267.6 561.8,266.3 563.9,265.1 566.0,263.8 568.1,262.5 570.0,261.2 571.9,260.0 573.7,258.7 575.4,257.4 577.1,256.2 578.6,254.9 580.0,253.8 581.3,252.6 582.4,251.3 583.4,250.2 584.3,249.1 585.0,248.2 585.6,247.5 585.9,249.2 586.3,251.5 586.8,254.2 587.3,257.1 587.7,260.0 588.0,262.5 588.2,264.8 588.4,266.9 588.5,269.1 588.5,271.1 588.5,273.1 588.5,275.0 588.4,276.8 588.3,278.5 588.2,280.2 588.0,281.8 587.8,283.4 587.5,285.0 587.2,286.7 586.8,288.4 586.4,290.2 586.0,291.9 585.5,293.5 585.0,295.0 584.5,296.4 583.9,297.7 583.4,298.9 582.7,300.1 582.0,301.3 581.2,302.5 580.4,303.8 579.4,305.0 578.4,306.3 577.3,307.6 576.1,308.8 575.0,310.0 573.9,311.1 572.7,312.2 571.5,313.2 570.2,314.2 568.9,315.2 567.5,316.2 566.0,317.3 564.4,318.3 562.8,319.4 561.1,320.4 559.3,321.5 557.5,322.5 555.6,323.6 553.5,324.6 551.4,325.7 549.3,326.8 547.1,327.8 545.0,328.8 542.9,329.7 540.8,330.6 538.8,331.4 536.7,332.2 534.6,333.0 532.5,333.8 530.4,334.4 528.3,335.1 526.2,335.7 524.2,336.3 522.1,336.9 520.0,337.5 517.9,338.1 515.8,338.8 513.8,339.4 511.7,340.0 509.6,340.7 507.5,341.2 505.4,341.8 503.3,342.3 501.2,342.9 499.2,343.4 497.1,343.9 495.0,344.4 492.9,344.9 490.8,345.5 488.8,346.0 486.7,346.5 484.6,347.0 482.5,347.5 480.4,348.0 478.1,348.4 475.9,348.9 473.8,349.3 471.8,349.7 470.0,350.0 468.5,350.3 467.3,350.4 466.2,350.6 465.2,350.7 464.0,350.8 462.5,351.0 460.7,351.2 458.7,351.4 456.6,351.6 454.4,351.8 452.1,352.0 450.0,352.2 447.9,352.5 445.8,352.7 443.8,352.9 441.7,353.1 439.6,353.3 437.5,353.5 435.4,353.7 433.3,353.8 431.2,354.0 429.2,354.1 427.1,354.3 425.0,354.4 422.9,354.5 420.8,354.6 418.8,354.7 416.7,354.8 414.6,354.9 412.5,355.0 410.6,355.1 408.8,355.2 407.0,355.3 405.1,355.4 402.8,355.5 400.0,355.5 396.4,355.5 392.1,355.4 387.5,355.3 382.9,355.2 378.6,355.1 375.0,355.0 372.2,354.9 369.9,354.9 368.0,354.8 366.2,354.8 364.4,354.7 362.5,354.6 360.4,354.5 358.3,354.4 356.2,354.2 354.2,354.1 352.1,353.9 350.0,353.8 347.9,353.6 345.8,353.4 343.8,353.1 341.7,352.9 339.6,352.7 337.5,352.5 335.4,352.3 333.3,352.1 331.2,351.9 329.2,351.7 327.1,351.5 325.0,351.2 322.9,351.0 320.8,350.7 318.8,350.4 316.7,350.1 314.6,349.8 312.5,349.4 310.5,349.0 308.6,348.6 306.6,348.2 304.6,347.8 302.4,347.4 300.0,346.9 297.2,346.4 294.0,345.9 290.6,345.4 287.3,344.8 284.1,344.3 281.2,343.8 278.8,343.2 276.6,342.7 274.6,342.2 272.7,341.7 270.8,341.2 268.8,340.6 266.7,340.0 264.6,339.4 262.5,338.8 260.4,338.2 258.3,337.6 256.2,336.9 254.2,336.2 252.1,335.6 250.0,334.9 247.9,334.1 245.8,333.3 243.8,332.5 241.7,331.6 239.6,330.6 237.5,329.5 235.4,328.4 233.3,327.3 231.2,326.2 229.1,325.2 226.9,324.1 224.7,322.9 222.5,321.8 220.5,320.6 218.8,319.4 217.2,318.2 215.8,316.9 214.5,315.6 213.4,314.2 212.4,312.9 211.5,311.5 210.8,310.1 210.2,308.8 209.8,307.4 209.5,306.0 209.3,304.5 209.0,303.0 208.8,301.4 208.6,299.7 208.4,298.0 208.3,296.2 208.3,294.4 208.3,292.5 208.4,290.5 208.5,288.5 208.7,286.4 208.9,284.2 209.2,282.1 209.4,280.0 209.7,277.9 209.9,275.8 210.2,273.7 210.6,271.6 210.9,269.5 211.2,267.5 211.7,265.4 212.1,263.2 212.6,261.1 213.1,259.1 213.5,257.5Z" fill="url(#bandp)"/>
    <path d="M227.0,272.0 228.4,271.5 230.0,271.5 231.8,271.8 233.6,272.3 235.6,272.9 237.5,273.5 239.5,274.1 241.5,274.9 243.6,275.8 245.8,276.8 247.9,277.8 250.0,278.8 252.1,279.7 254.2,280.8 256.2,281.9 258.3,282.9 260.4,284.0 262.5,285.0 264.4,286.0 266.2,286.8 268.0,287.7 269.9,288.6 272.2,289.6 275.0,290.6 278.4,291.8 282.4,293.0 286.7,294.3 291.2,295.6 295.7,296.9 300.0,298.0 304.2,299.0 308.5,299.9 312.8,300.8 317.0,301.6 321.1,302.3 325.0,303.0 328.8,303.6 332.5,304.1 336.1,304.6 339.5,305.0 342.5,305.3 345.0,305.5 347.0,305.5 348.4,305.3 349.5,305.0 350.4,304.7 351.2,304.7 352.0,305.0 352.9,305.7 353.6,306.7 354.3,308.0 354.9,309.3 355.4,310.7 356.0,312.0 356.6,313.2 357.2,314.4 357.7,315.7 358.2,317.0 358.6,318.4 358.8,320.0 358.8,321.8 358.6,323.7 358.4,325.7 358.0,327.8 357.5,329.9 357.0,332.0 356.3,334.2 355.5,336.4 354.6,338.7 353.6,341.0 352.8,343.1 352.0,345.0 351.5,346.8 351.2,348.5 350.9,350.1 350.6,351.5 350.0,352.7 349.0,353.5 347.6,353.9 345.8,353.9 343.8,353.6 341.7,353.2 339.6,352.8 337.5,352.5 335.5,352.3 333.4,352.1 331.3,351.9 329.2,351.7 327.1,351.5 325.0,351.2 322.9,351.0 320.8,350.7 318.8,350.4 316.7,350.1 314.6,349.8 312.5,349.4 310.5,349.0 308.6,348.6 306.6,348.2 304.6,347.8 302.4,347.4 300.0,346.9 297.2,346.4 294.0,345.9 290.6,345.4 287.3,344.8 284.1,344.3 281.2,343.8 278.8,343.2 276.6,342.7 274.6,342.2 272.7,341.7 270.8,341.2 268.8,340.6 266.7,340.0 264.6,339.4 262.5,338.8 260.4,338.2 258.3,337.6 256.2,336.9 254.2,336.2 252.1,335.6 250.0,334.9 247.9,334.1 245.8,333.3 243.8,332.5 241.6,331.7 239.4,330.9 237.3,330.0 235.1,329.0 233.1,327.8 231.2,326.2 229.5,324.4 227.8,322.2 226.2,319.8 224.8,317.2 223.6,314.6 222.5,312.0 221.7,309.3 221.0,306.4 220.6,303.4 220.3,300.5 220.1,297.6 220.0,295.0 220.0,292.6 220.2,290.3 220.5,288.1 220.9,286.0 221.4,283.9 222.0,282.0 222.6,280.0 223.2,278.0 224.0,276.1 224.8,274.4 225.8,273.0Z" fill="#35586a" fill-opacity="0.36"/>
    <g clip-path="url(#ringclip)">
      <path d="M212.36,203.71 C212.07,206.04 212.26,208.70 211.30,210.66 C210.34,212.61 208.49,214.20 206.63,215.44 C204.77,216.69 202.29,217.22 200.13,218.11 C197.97,219.01 195.79,219.88 193.65,220.82 C191.50,221.76 189.37,222.73 187.26,223.75 C185.16,224.77 183.07,225.84 181.00,226.93 C178.93,228.02 176.88,229.15 174.83,230.29 C172.78,231.42 170.77,232.62 168.72,233.75 C166.67,234.89 164.62,236.01 162.55,237.11 C160.48,238.21 158.35,239.20 156.31,240.34 C154.27,241.49 152.26,242.69 150.32,243.99 C148.38,245.29 146.53,246.73 144.66,248.14 C142.80,249.56 140.93,250.98 139.12,252.46 C137.31,253.94 135.44,255.38 133.78,257.01 C132.11,258.65 130.64,260.49 129.14,262.28 C127.63,264.08 126.20,265.93 124.77,267.78 C123.33,269.63 121.87,271.46 120.51,273.37 C119.15,275.27 117.84,277.22 116.61,279.21 C115.38,281.20 114.22,283.24 113.14,285.32 C112.06,287.39 111.07,289.52 110.15,291.67 C109.23,293.82 108.30,295.99 107.62,298.22 C106.93,300.46 106.41,302.76 106.04,305.07 C105.68,307.37 105.50,309.73 105.43,312.06 C105.37,314.39 105.47,316.74 105.67,319.06 C105.87,321.39 106.23,323.71 106.63,326.01 C107.04,328.31 107.42,330.65 108.10,332.88 C108.77,335.11 109.71,337.27 110.68,339.40 C111.65,341.52 112.84,343.55 113.91,345.63 C114.99,347.71 116.04,349.81 117.15,351.87 C118.25,353.93 119.27,356.07 120.55,358.01 C121.83,359.95 123.31,361.77 124.84,363.53 C126.37,365.30 128.09,366.91 129.71,368.59 C131.34,370.28 132.96,371.97 134.58,373.65 C136.21,375.34 137.81,377.05 139.46,378.72 C141.10,380.38 142.78,382.02 144.45,383.66 C146.12,385.30 147.77,386.96 149.48,388.56 C151.18,390.17 152.92,391.74 154.68,393.29 C156.44,394.83 158.23,396.34 160.04,397.81 C161.86,399.29 163.69,400.76 165.59,402.13 C167.49,403.49 169.48,404.74 171.45,405.99 C173.43,407.25 175.43,408.46 177.44,409.66 C179.45,410.87 181.48,412.03 183.51,413.20 C185.54,414.36 187.54,415.59 189.62,416.65 C191.71,417.72 193.87,418.63 196.01,419.59 C198.14,420.54 200.32,421.41 202.45,422.37 C204.59,423.34 206.69,424.38 208.80,425.38 C210.92,426.39 213.02,427.42 215.14,428.41 C217.27,429.39 219.41,430.34 221.55,431.29 C223.69,432.24 225.83,433.19 227.99,434.09 C230.15,435.00 232.32,435.88 234.50,436.73 C236.68,437.58 238.88,438.40 241.08,439.20 C243.28,440.00 245.50,440.74 247.71,441.51 C249.92,442.28 252.14,443.04 254.35,443.81 C256.56,444.58 258.77,445.35 260.98,446.12 C263.20,446.89 265.39,447.71 267.62,448.43 C269.85,449.14 272.10,449.78 274.36,450.42 C276.61,451.06 278.87,451.67 281.13,452.26 C283.40,452.84 285.68,453.41 287.96,453.92 C290.24,454.43 292.55,454.87 294.84,455.34 C297.13,455.81 299.44,456.23 301.73,456.73 C304.02,457.22 306.29,457.78 308.57,458.31 C310.85,458.84 313.13,459.36 315.42,459.89 C317.70,460.42 319.97,461.00 322.26,461.46 C324.56,461.93 326.88,462.27 329.18,462.68 C331.49,463.08 333.79,463.52 336.10,463.89 C338.41,464.26 340.73,464.58 343.05,464.90 C345.37,465.21 347.70,465.51 350.02,465.79 C352.35,466.08 354.67,466.37 357.00,466.62 C359.33,466.86 361.66,467.08 363.99,467.28 C366.32,467.48 368.66,467.65 371.00,467.81 C373.33,467.97 375.67,468.11 378.01,468.24 C380.35,468.38 382.68,468.53 385.02,468.62 C387.36,468.72 389.70,468.74 392.04,468.80 C394.39,468.86 396.73,468.95 399.07,468.98 C401.41,469.00 403.75,468.96 406.09,468.95 C408.43,468.93 410.78,468.91 413.12,468.88 C415.46,468.85 417.80,468.80 420.14,468.75 C422.48,468.69 424.82,468.61 427.16,468.55 C429.50,468.48 431.85,468.41 434.19,468.35 C436.53,468.28 438.87,468.23 441.21,468.15 C443.55,468.06 445.89,467.94 448.23,467.84 C450.57,467.74 452.91,467.64 455.25,467.54 C457.59,467.44 459.93,467.35 462.26,467.23 C464.60,467.11 466.94,466.98 469.28,466.83 C471.61,466.67 473.95,466.47 476.28,466.29 C478.62,466.11 480.95,465.96 483.28,465.73 C485.61,465.50 487.94,465.19 490.26,464.93 C492.59,464.66 494.92,464.40 497.24,464.12 C499.57,463.85 501.90,463.60 504.22,463.30 C506.54,462.99 508.85,462.63 511.17,462.29 C513.49,461.96 515.81,461.66 518.13,461.29 C520.44,460.93 522.74,460.51 525.05,460.10 C527.35,459.69 529.65,459.26 531.96,458.84 C534.26,458.42 536.57,458.00 538.87,457.58 C541.17,457.16 543.48,456.74 545.78,456.32 C548.08,455.90 550.39,455.48 552.69,455.06 C555.00,454.64 557.30,454.22 559.60,453.80 C561.91,453.37 564.21,452.96 566.51,452.51 C568.81,452.06 571.11,451.61 573.39,451.09 C575.68,450.58 577.94,449.98 580.21,449.42 C582.49,448.86 584.77,448.33 587.03,447.73 C589.30,447.14 591.55,446.50 593.81,445.86 C596.06,445.22 598.32,444.61 600.55,443.89 C602.77,443.16 604.98,442.38 607.16,441.52 C609.33,440.66 611.47,439.70 613.59,438.72 C615.72,437.74 617.79,436.63 619.91,435.64 C622.04,434.66 624.19,433.74 626.35,432.84 C628.50,431.93 630.69,431.08 632.86,430.20 C635.03,429.32 637.20,428.44 639.37,427.56 C641.54,426.68 643.71,425.80 645.88,424.93 C648.05,424.05 650.26,423.25 652.39,422.29 C654.53,421.33 656.63,420.29 658.69,419.19 C660.76,418.09 662.79,416.92 664.79,415.69 C666.78,414.47 668.74,413.18 670.68,411.87 C672.62,410.56 674.52,409.19 676.43,407.83 C678.33,406.47 680.23,405.10 682.11,403.70 C683.99,402.31 685.85,400.89 687.71,399.46 C689.57,398.04 691.49,396.69 693.25,395.15 C695.01,393.61 696.71,391.98 698.26,390.23 C699.81,388.49 701.31,386.65 702.55,384.68 C703.79,382.72 704.77,380.59 705.68,378.45 C706.59,376.30 707.24,374.03 708.01,371.82 C708.78,369.61 709.64,367.42 710.29,365.18 C710.94,362.93 711.55,360.65 711.92,358.34 C712.30,356.04 712.50,353.69 712.52,351.35 C712.55,349.02 712.40,346.65 712.09,344.34 C711.78,342.03 711.31,339.70 710.64,337.47 C709.97,335.24 709.09,333.06 708.05,330.98 C707.00,328.90 705.62,326.97 704.37,324.99 C703.11,323.02 701.80,321.08 700.51,319.12 C699.21,317.17 697.98,315.18 696.62,313.28 C695.26,311.37 693.85,309.49 692.36,307.69 C690.87,305.89 689.35,304.09 687.66,302.48 C685.98,300.87 684.07,299.49 682.23,298.05 C680.39,296.61 678.47,295.25 676.62,293.82 C674.77,292.38 672.95,290.91 671.12,289.45 C669.29,287.99 667.49,286.48 665.64,285.06 C663.78,283.63 661.88,282.26 659.98,280.90 C658.08,279.53 656.14,278.22 654.22,276.88 C652.30,275.54 650.38,274.20 648.46,272.86 C646.54,271.52 644.63,270.15 642.70,268.84 C640.76,267.52 638.82,266.21 636.85,264.95 C634.88,263.68 632.87,262.48 630.88,261.24 C628.89,260.01 626.92,258.75 624.91,257.53 C622.91,256.32 620.90,255.11 618.87,253.96 C616.83,252.80 614.78,251.68 612.70,250.60 C610.63,249.52 608.53,248.47 606.42,247.46 C604.30,246.45 602.17,245.49 600.02,244.56 C597.88,243.62 595.35,243.15 593.54,241.86 C591.72,240.57 590.16,238.77 589.12,236.80 C588.08,234.83 588.02,232.28 587.30,230.06 C586.57,227.85 585.65,225.68 584.78,223.51 C583.91,221.33 582.99,219.18 582.08,217.02 C581.18,214.86 580.21,212.72 579.35,210.54 C578.50,208.37 577.72,206.16 576.95,203.95 C576.17,201.74 575.51,199.49 574.69,197.29 C573.87,195.10 572.96,192.95 572.03,190.81 C571.09,188.66 570.03,186.57 569.06,184.44 C568.09,182.30 567.12,180.18 566.21,178.02 C565.29,175.86 564.53,173.64 563.60,171.50 C562.68,169.35 561.75,167.20 560.66,165.13 C559.56,163.07 558.26,161.11 557.04,159.11 C555.81,157.12 554.54,155.15 553.31,153.16 C552.09,151.16 550.78,149.21 549.69,147.15 C548.60,145.08 547.75,142.88 546.78,140.75 C545.81,138.62 544.95,136.43 543.88,134.35 C542.81,132.27 541.67,130.22 540.38,128.28 C539.08,126.33 537.55,124.55 536.13,122.68 C534.71,120.82 533.28,118.97 531.85,117.11 C530.43,115.25 529.03,113.37 527.58,111.53 C526.13,109.69 524.68,107.86 523.16,106.08 C521.64,104.29 520.11,102.52 518.48,100.85 C516.84,99.18 515.10,97.60 513.35,96.04 C511.61,94.48 509.80,92.99 508.01,91.49 C506.21,89.99 504.40,88.51 502.58,87.02 C500.77,85.54 498.96,84.06 497.13,82.60 C495.30,81.13 493.50,79.63 491.62,78.24 C489.73,76.86 487.85,75.43 485.82,74.30 C483.78,73.16 481.55,72.37 479.41,71.43 C477.27,70.48 475.11,69.57 472.96,68.64 C470.81,67.71 468.68,66.73 466.51,65.85 C464.35,64.97 462.16,64.11 459.95,63.36 C457.73,62.62 455.48,61.95 453.21,61.37 C450.95,60.79 448.65,60.31 446.35,59.89 C444.05,59.47 441.72,59.16 439.40,58.86 C437.08,58.57 434.75,58.30 432.41,58.13 C430.08,57.96 427.74,57.86 425.40,57.85 C423.06,57.83 420.72,57.93 418.38,58.03 C416.04,58.14 413.70,58.31 411.36,58.46 C409.03,58.62 406.69,58.72 404.36,58.97 C402.03,59.22 399.73,59.65 397.41,59.99 C395.09,60.33 392.78,60.67 390.46,61.01 C388.14,61.35 385.82,61.66 383.51,62.03 C381.20,62.40 378.89,62.77 376.59,63.24 C374.30,63.71 372.04,64.33 369.76,64.86 C367.47,65.38 365.19,65.88 362.90,66.37 C360.61,66.85 358.31,67.30 356.01,67.77 C353.72,68.24 351.42,68.71 349.13,69.17 C346.83,69.64 344.54,70.13 342.25,70.58 C339.95,71.03 337.64,71.44 335.34,71.87 C333.04,72.30 330.73,72.69 328.43,73.15 C326.14,73.62 323.87,74.19 321.57,74.66 C319.28,75.13 316.98,75.56 314.67,75.96 C312.37,76.37 310.05,76.70 307.74,77.09 C305.43,77.47 303.12,77.87 300.81,78.28 C298.51,78.70 296.22,79.18 293.91,79.58 C291.60,79.98 289.29,80.38 286.97,80.67 C284.65,80.95 282.31,81.13 279.97,81.29 C277.64,81.45 275.30,81.52 272.96,81.63 C270.62,81.75 268.28,81.86 265.94,81.97 C263.60,82.08 261.26,82.18 258.92,82.30 C256.59,82.42 254.21,82.36 251.91,82.71 C249.61,83.05 247.16,83.39 245.12,84.37 C243.08,85.35 241.22,86.92 239.67,88.60 C238.13,90.28 237.00,92.45 235.85,94.48 C234.69,96.51 233.70,98.65 232.75,100.78 C231.79,102.92 230.93,105.10 230.11,107.29 C229.29,109.49 228.53,111.70 227.83,113.94 C227.14,116.17 226.56,118.45 225.94,120.70 C225.31,122.96 224.69,125.22 224.07,127.47 C223.44,129.73 222.77,131.98 222.20,134.25 C221.62,136.52 221.15,138.81 220.62,141.09 C220.10,143.38 219.52,145.65 219.05,147.94 C218.58,150.23 218.17,152.54 217.78,154.85 C217.40,157.16 217.06,159.47 216.75,161.79 C216.44,164.12 216.21,166.45 215.94,168.77 C215.67,171.10 215.40,173.42 215.14,175.75 C214.87,178.08 214.61,180.41 214.37,182.73 C214.13,185.06 213.92,187.40 213.70,189.73 C213.48,192.06 213.25,194.39 213.03,196.72 C212.81,199.05 212.65,201.39 212.36,203.71Z" fill="none" stroke="#fff" stroke-width="18" stroke-linejoin="round"/>
      <path d="M212.36,203.71 C212.07,206.04 212.26,208.70 211.30,210.66 C210.34,212.61 208.49,214.20 206.63,215.44 C204.77,216.69 202.29,217.22 200.13,218.11 C197.97,219.01 195.79,219.88 193.65,220.82 C191.50,221.76 189.37,222.73 187.26,223.75 C185.16,224.77 183.07,225.84 181.00,226.93 C178.93,228.02 176.88,229.15 174.83,230.29 C172.78,231.42 170.77,232.62 168.72,233.75 C166.67,234.89 164.62,236.01 162.55,237.11 C160.48,238.21 158.35,239.20 156.31,240.34 C154.27,241.49 152.26,242.69 150.32,243.99 C148.38,245.29 146.53,246.73 144.66,248.14 C142.80,249.56 140.93,250.98 139.12,252.46 C137.31,253.94 135.44,255.38 133.78,257.01 C132.11,258.65 130.64,260.49 129.14,262.28 C127.63,264.08 126.20,265.93 124.77,267.78 C123.33,269.63 121.87,271.46 120.51,273.37 C119.15,275.27 117.84,277.22 116.61,279.21 C115.38,281.20 114.22,283.24 113.14,285.32 C112.06,287.39 111.07,289.52 110.15,291.67 C109.23,293.82 108.30,295.99 107.62,298.22 C106.93,300.46 106.41,302.76 106.04,305.07 C105.68,307.37 105.50,309.73 105.43,312.06 C105.37,314.39 105.47,316.74 105.67,319.06 C105.87,321.39 106.23,323.71 106.63,326.01 C107.04,328.31 107.42,330.65 108.10,332.88 C108.77,335.11 109.71,337.27 110.68,339.40 C111.65,341.52 112.84,343.55 113.91,345.63 C114.99,347.71 116.04,349.81 117.15,351.87 C118.25,353.93 119.27,356.07 120.55,358.01 C121.83,359.95 123.31,361.77 124.84,363.53 C126.37,365.30 128.09,366.91 129.71,368.59 C131.34,370.28 132.96,371.97 134.58,373.65 C136.21,375.34 137.81,377.05 139.46,378.72 C141.10,380.38 142.78,382.02 144.45,383.66 C146.12,385.30 147.77,386.96 149.48,388.56 C151.18,390.17 152.92,391.74 154.68,393.29 C156.44,394.83 158.23,396.34 160.04,397.81 C161.86,399.29 163.69,400.76 165.59,402.13 C167.49,403.49 169.48,404.74 171.45,405.99 C173.43,407.25 175.43,408.46 177.44,409.66 C179.45,410.87 181.48,412.03 183.51,413.20 C185.54,414.36 187.54,415.59 189.62,416.65 C191.71,417.72 193.87,418.63 196.01,419.59 C198.14,420.54 200.32,421.41 202.45,422.37 C204.59,423.34 206.69,424.38 208.80,425.38 C210.92,426.39 213.02,427.42 215.14,428.41 C217.27,429.39 219.41,430.34 221.55,431.29 C223.69,432.24 225.83,433.19 227.99,434.09 C230.15,435.00 232.32,435.88 234.50,436.73 C236.68,437.58 238.88,438.40 241.08,439.20 C243.28,440.00 245.50,440.74 247.71,441.51 C249.92,442.28 252.14,443.04 254.35,443.81 C256.56,444.58 258.77,445.35 260.98,446.12 C263.20,446.89 265.39,447.71 267.62,448.43 C269.85,449.14 272.10,449.78 274.36,450.42 C276.61,451.06 278.87,451.67 281.13,452.26 C283.40,452.84 285.68,453.41 287.96,453.92 C290.24,454.43 292.55,454.87 294.84,455.34 C297.13,455.81 299.44,456.23 301.73,456.73 C304.02,457.22 306.29,457.78 308.57,458.31 C310.85,458.84 313.13,459.36 315.42,459.89 C317.70,460.42 319.97,461.00 322.26,461.46 C324.56,461.93 326.88,462.27 329.18,462.68 C331.49,463.08 333.79,463.52 336.10,463.89 C338.41,464.26 340.73,464.58 343.05,464.90 C345.37,465.21 347.70,465.51 350.02,465.79 C352.35,466.08 354.67,466.37 357.00,466.62 C359.33,466.86 361.66,467.08 363.99,467.28 C366.32,467.48 368.66,467.65 371.00,467.81 C373.33,467.97 375.67,468.11 378.01,468.24 C380.35,468.38 382.68,468.53 385.02,468.62 C387.36,468.72 389.70,468.74 392.04,468.80 C394.39,468.86 396.73,468.95 399.07,468.98 C401.41,469.00 403.75,468.96 406.09,468.95 C408.43,468.93 410.78,468.91 413.12,468.88 C415.46,468.85 417.80,468.80 420.14,468.75 C422.48,468.69 424.82,468.61 427.16,468.55 C429.50,468.48 431.85,468.41 434.19,468.35 C436.53,468.28 438.87,468.23 441.21,468.15 C443.55,468.06 445.89,467.94 448.23,467.84 C450.57,467.74 452.91,467.64 455.25,467.54 C457.59,467.44 459.93,467.35 462.26,467.23 C464.60,467.11 466.94,466.98 469.28,466.83 C471.61,466.67 473.95,466.47 476.28,466.29 C478.62,466.11 480.95,465.96 483.28,465.73 C485.61,465.50 487.94,465.19 490.26,464.93 C492.59,464.66 494.92,464.40 497.24,464.12 C499.57,463.85 501.90,463.60 504.22,463.30 C506.54,462.99 508.85,462.63 511.17,462.29 C513.49,461.96 515.81,461.66 518.13,461.29 C520.44,460.93 522.74,460.51 525.05,460.10 C527.35,459.69 529.65,459.26 531.96,458.84 C534.26,458.42 536.57,458.00 538.87,457.58 C541.17,457.16 543.48,456.74 545.78,456.32 C548.08,455.90 550.39,455.48 552.69,455.06 C555.00,454.64 557.30,454.22 559.60,453.80 C561.91,453.37 564.21,452.96 566.51,452.51 C568.81,452.06 571.11,451.61 573.39,451.09 C575.68,450.58 577.94,449.98 580.21,449.42 C582.49,448.86 584.77,448.33 587.03,447.73 C589.30,447.14 591.55,446.50 593.81,445.86 C596.06,445.22 598.32,444.61 600.55,443.89 C602.77,443.16 604.98,442.38 607.16,441.52 C609.33,440.66 611.47,439.70 613.59,438.72 C615.72,437.74 617.79,436.63 619.91,435.64 C622.04,434.66 624.19,433.74 626.35,432.84 C628.50,431.93 630.69,431.08 632.86,430.20 C635.03,429.32 637.20,428.44 639.37,427.56 C641.54,426.68 643.71,425.80 645.88,424.93 C648.05,424.05 650.26,423.25 652.39,422.29 C654.53,421.33 656.63,420.29 658.69,419.19 C660.76,418.09 662.79,416.92 664.79,415.69 C666.78,414.47 668.74,413.18 670.68,411.87 C672.62,410.56 674.52,409.19 676.43,407.83 C678.33,406.47 680.23,405.10 682.11,403.70 C683.99,402.31 685.85,400.89 687.71,399.46 C689.57,398.04 691.49,396.69 693.25,395.15 C695.01,393.61 696.71,391.98 698.26,390.23 C699.81,388.49 701.31,386.65 702.55,384.68 C703.79,382.72 704.77,380.59 705.68,378.45 C706.59,376.30 707.24,374.03 708.01,371.82 C708.78,369.61 709.64,367.42 710.29,365.18 C710.94,362.93 711.55,360.65 711.92,358.34 C712.30,356.04 712.50,353.69 712.52,351.35 C712.55,349.02 712.40,346.65 712.09,344.34 C711.78,342.03 711.31,339.70 710.64,337.47 C709.97,335.24 709.09,333.06 708.05,330.98 C707.00,328.90 705.62,326.97 704.37,324.99 C703.11,323.02 701.80,321.08 700.51,319.12 C699.21,317.17 697.98,315.18 696.62,313.28 C695.26,311.37 693.85,309.49 692.36,307.69 C690.87,305.89 689.35,304.09 687.66,302.48 C685.98,300.87 684.07,299.49 682.23,298.05 C680.39,296.61 678.47,295.25 676.62,293.82 C674.77,292.38 672.95,290.91 671.12,289.45 C669.29,287.99 667.49,286.48 665.64,285.06 C663.78,283.63 661.88,282.26 659.98,280.90 C658.08,279.53 656.14,278.22 654.22,276.88 C652.30,275.54 650.38,274.20 648.46,272.86 C646.54,271.52 644.63,270.15 642.70,268.84 C640.76,267.52 638.82,266.21 636.85,264.95 C634.88,263.68 632.87,262.48 630.88,261.24 C628.89,260.01 626.92,258.75 624.91,257.53 C622.91,256.32 620.90,255.11 618.87,253.96 C616.83,252.80 614.78,251.68 612.70,250.60 C610.63,249.52 608.53,248.47 606.42,247.46 C604.30,246.45 602.17,245.49 600.02,244.56 C597.88,243.62 595.35,243.15 593.54,241.86 C591.72,240.57 590.16,238.77 589.12,236.80 C588.08,234.83 588.02,232.28 587.30,230.06 C586.57,227.85 585.65,225.68 584.78,223.51 C583.91,221.33 582.99,219.18 582.08,217.02 C581.18,214.86 580.21,212.72 579.35,210.54 C578.50,208.37 577.72,206.16 576.95,203.95 C576.17,201.74 575.51,199.49 574.69,197.29 C573.87,195.10 572.96,192.95 572.03,190.81 C571.09,188.66 570.03,186.57 569.06,184.44 C568.09,182.30 567.12,180.18 566.21,178.02 C565.29,175.86 564.53,173.64 563.60,171.50 C562.68,169.35 561.75,167.20 560.66,165.13 C559.56,163.07 558.26,161.11 557.04,159.11 C555.81,157.12 554.54,155.15 553.31,153.16 C552.09,151.16 550.78,149.21 549.69,147.15 C548.60,145.08 547.75,142.88 546.78,140.75 C545.81,138.62 544.95,136.43 543.88,134.35 C542.81,132.27 541.67,130.22 540.38,128.28 C539.08,126.33 537.55,124.55 536.13,122.68 C534.71,120.82 533.28,118.97 531.85,117.11 C530.43,115.25 529.03,113.37 527.58,111.53 C526.13,109.69 524.68,107.86 523.16,106.08 C521.64,104.29 520.11,102.52 518.48,100.85 C516.84,99.18 515.10,97.60 513.35,96.04 C511.61,94.48 509.80,92.99 508.01,91.49 C506.21,89.99 504.40,88.51 502.58,87.02 C500.77,85.54 498.96,84.06 497.13,82.60 C495.30,81.13 493.50,79.63 491.62,78.24 C489.73,76.86 487.85,75.43 485.82,74.30 C483.78,73.16 481.55,72.37 479.41,71.43 C477.27,70.48 475.11,69.57 472.96,68.64 C470.81,67.71 468.68,66.73 466.51,65.85 C464.35,64.97 462.16,64.11 459.95,63.36 C457.73,62.62 455.48,61.95 453.21,61.37 C450.95,60.79 448.65,60.31 446.35,59.89 C444.05,59.47 441.72,59.16 439.40,58.86 C437.08,58.57 434.75,58.30 432.41,58.13 C430.08,57.96 427.74,57.86 425.40,57.85 C423.06,57.83 420.72,57.93 418.38,58.03 C416.04,58.14 413.70,58.31 411.36,58.46 C409.03,58.62 406.69,58.72 404.36,58.97 C402.03,59.22 399.73,59.65 397.41,59.99 C395.09,60.33 392.78,60.67 390.46,61.01 C388.14,61.35 385.82,61.66 383.51,62.03 C381.20,62.40 378.89,62.77 376.59,63.24 C374.30,63.71 372.04,64.33 369.76,64.86 C367.47,65.38 365.19,65.88 362.90,66.37 C360.61,66.85 358.31,67.30 356.01,67.77 C353.72,68.24 351.42,68.71 349.13,69.17 C346.83,69.64 344.54,70.13 342.25,70.58 C339.95,71.03 337.64,71.44 335.34,71.87 C333.04,72.30 330.73,72.69 328.43,73.15 C326.14,73.62 323.87,74.19 321.57,74.66 C319.28,75.13 316.98,75.56 314.67,75.96 C312.37,76.37 310.05,76.70 307.74,77.09 C305.43,77.47 303.12,77.87 300.81,78.28 C298.51,78.70 296.22,79.18 293.91,79.58 C291.60,79.98 289.29,80.38 286.97,80.67 C284.65,80.95 282.31,81.13 279.97,81.29 C277.64,81.45 275.30,81.52 272.96,81.63 C270.62,81.75 268.28,81.86 265.94,81.97 C263.60,82.08 261.26,82.18 258.92,82.30 C256.59,82.42 254.21,82.36 251.91,82.71 C249.61,83.05 247.16,83.39 245.12,84.37 C243.08,85.35 241.22,86.92 239.67,88.60 C238.13,90.28 237.00,92.45 235.85,94.48 C234.69,96.51 233.70,98.65 232.75,100.78 C231.79,102.92 230.93,105.10 230.11,107.29 C229.29,109.49 228.53,111.70 227.83,113.94 C227.14,116.17 226.56,118.45 225.94,120.70 C225.31,122.96 224.69,125.22 224.07,127.47 C223.44,129.73 222.77,131.98 222.20,134.25 C221.62,136.52 221.15,138.81 220.62,141.09 C220.10,143.38 219.52,145.65 219.05,147.94 C218.58,150.23 218.17,152.54 217.78,154.85 C217.40,157.16 217.06,159.47 216.75,161.79 C216.44,164.12 216.21,166.45 215.94,168.77 C215.67,171.10 215.40,173.42 215.14,175.75 C214.87,178.08 214.61,180.41 214.37,182.73 C214.13,185.06 213.92,187.40 213.70,189.73 C213.48,192.06 213.25,194.39 213.03,196.72 C212.81,199.05 212.65,201.39 212.36,203.71Z" fill="none" stroke="#111" stroke-width="18" stroke-dasharray="1 1" stroke-linejoin="round"/>
      <path d="M212.36,203.71 C212.07,206.04 212.26,208.70 211.30,210.66 C210.34,212.61 208.49,214.20 206.63,215.44 C204.77,216.69 202.29,217.22 200.13,218.11 C197.97,219.01 195.79,219.88 193.65,220.82 C191.50,221.76 189.37,222.73 187.26,223.75 C185.16,224.77 183.07,225.84 181.00,226.93 C178.93,228.02 176.88,229.15 174.83,230.29 C172.78,231.42 170.77,232.62 168.72,233.75 C166.67,234.89 164.62,236.01 162.55,237.11 C160.48,238.21 158.35,239.20 156.31,240.34 C154.27,241.49 152.26,242.69 150.32,243.99 C148.38,245.29 146.53,246.73 144.66,248.14 C142.80,249.56 140.93,250.98 139.12,252.46 C137.31,253.94 135.44,255.38 133.78,257.01 C132.11,258.65 130.64,260.49 129.14,262.28 C127.63,264.08 126.20,265.93 124.77,267.78 C123.33,269.63 121.87,271.46 120.51,273.37 C119.15,275.27 117.84,277.22 116.61,279.21 C115.38,281.20 114.22,283.24 113.14,285.32 C112.06,287.39 111.07,289.52 110.15,291.67 C109.23,293.82 108.30,295.99 107.62,298.22 C106.93,300.46 106.41,302.76 106.04,305.07 C105.68,307.37 105.50,309.73 105.43,312.06 C105.37,314.39 105.47,316.74 105.67,319.06 C105.87,321.39 106.23,323.71 106.63,326.01 C107.04,328.31 107.42,330.65 108.10,332.88 C108.77,335.11 109.71,337.27 110.68,339.40 C111.65,341.52 112.84,343.55 113.91,345.63 C114.99,347.71 116.04,349.81 117.15,351.87 C118.25,353.93 119.27,356.07 120.55,358.01 C121.83,359.95 123.31,361.77 124.84,363.53 C126.37,365.30 128.09,366.91 129.71,368.59 C131.34,370.28 132.96,371.97 134.58,373.65 C136.21,375.34 137.81,377.05 139.46,378.72 C141.10,380.38 142.78,382.02 144.45,383.66 C146.12,385.30 147.77,386.96 149.48,388.56 C151.18,390.17 152.92,391.74 154.68,393.29 C156.44,394.83 158.23,396.34 160.04,397.81 C161.86,399.29 163.69,400.76 165.59,402.13 C167.49,403.49 169.48,404.74 171.45,405.99 C173.43,407.25 175.43,408.46 177.44,409.66 C179.45,410.87 181.48,412.03 183.51,413.20 C185.54,414.36 187.54,415.59 189.62,416.65 C191.71,417.72 193.87,418.63 196.01,419.59 C198.14,420.54 200.32,421.41 202.45,422.37 C204.59,423.34 206.69,424.38 208.80,425.38 C210.92,426.39 213.02,427.42 215.14,428.41 C217.27,429.39 219.41,430.34 221.55,431.29 C223.69,432.24 225.83,433.19 227.99,434.09 C230.15,435.00 232.32,435.88 234.50,436.73 C236.68,437.58 238.88,438.40 241.08,439.20 C243.28,440.00 245.50,440.74 247.71,441.51 C249.92,442.28 252.14,443.04 254.35,443.81 C256.56,444.58 258.77,445.35 260.98,446.12 C263.20,446.89 265.39,447.71 267.62,448.43 C269.85,449.14 272.10,449.78 274.36,450.42 C276.61,451.06 278.87,451.67 281.13,452.26 C283.40,452.84 285.68,453.41 287.96,453.92 C290.24,454.43 292.55,454.87 294.84,455.34 C297.13,455.81 299.44,456.23 301.73,456.73 C304.02,457.22 306.29,457.78 308.57,458.31 C310.85,458.84 313.13,459.36 315.42,459.89 C317.70,460.42 319.97,461.00 322.26,461.46 C324.56,461.93 326.88,462.27 329.18,462.68 C331.49,463.08 333.79,463.52 336.10,463.89 C338.41,464.26 340.73,464.58 343.05,464.90 C345.37,465.21 347.70,465.51 350.02,465.79 C352.35,466.08 354.67,466.37 357.00,466.62 C359.33,466.86 361.66,467.08 363.99,467.28 C366.32,467.48 368.66,467.65 371.00,467.81 C373.33,467.97 375.67,468.11 378.01,468.24 C380.35,468.38 382.68,468.53 385.02,468.62 C387.36,468.72 389.70,468.74 392.04,468.80 C394.39,468.86 396.73,468.95 399.07,468.98 C401.41,469.00 403.75,468.96 406.09,468.95 C408.43,468.93 410.78,468.91 413.12,468.88 C415.46,468.85 417.80,468.80 420.14,468.75 C422.48,468.69 424.82,468.61 427.16,468.55 C429.50,468.48 431.85,468.41 434.19,468.35 C436.53,468.28 438.87,468.23 441.21,468.15 C443.55,468.06 445.89,467.94 448.23,467.84 C450.57,467.74 452.91,467.64 455.25,467.54 C457.59,467.44 459.93,467.35 462.26,467.23 C464.60,467.11 466.94,466.98 469.28,466.83 C471.61,466.67 473.95,466.47 476.28,466.29 C478.62,466.11 480.95,465.96 483.28,465.73 C485.61,465.50 487.94,465.19 490.26,464.93 C492.59,464.66 494.92,464.40 497.24,464.12 C499.57,463.85 501.90,463.60 504.22,463.30 C506.54,462.99 508.85,462.63 511.17,462.29 C513.49,461.96 515.81,461.66 518.13,461.29 C520.44,460.93 522.74,460.51 525.05,460.10 C527.35,459.69 529.65,459.26 531.96,458.84 C534.26,458.42 536.57,458.00 538.87,457.58 C541.17,457.16 543.48,456.74 545.78,456.32 C548.08,455.90 550.39,455.48 552.69,455.06 C555.00,454.64 557.30,454.22 559.60,453.80 C561.91,453.37 564.21,452.96 566.51,452.51 C568.81,452.06 571.11,451.61 573.39,451.09 C575.68,450.58 577.94,449.98 580.21,449.42 C582.49,448.86 584.77,448.33 587.03,447.73 C589.30,447.14 591.55,446.50 593.81,445.86 C596.06,445.22 598.32,444.61 600.55,443.89 C602.77,443.16 604.98,442.38 607.16,441.52 C609.33,440.66 611.47,439.70 613.59,438.72 C615.72,437.74 617.79,436.63 619.91,435.64 C622.04,434.66 624.19,433.74 626.35,432.84 C628.50,431.93 630.69,431.08 632.86,430.20 C635.03,429.32 637.20,428.44 639.37,427.56 C641.54,426.68 643.71,425.80 645.88,424.93 C648.05,424.05 650.26,423.25 652.39,422.29 C654.53,421.33 656.63,420.29 658.69,419.19 C660.76,418.09 662.79,416.92 664.79,415.69 C666.78,414.47 668.74,413.18 670.68,411.87 C672.62,410.56 674.52,409.19 676.43,407.83 C678.33,406.47 680.23,405.10 682.11,403.70 C683.99,402.31 685.85,400.89 687.71,399.46 C689.57,398.04 691.49,396.69 693.25,395.15 C695.01,393.61 696.71,391.98 698.26,390.23 C699.81,388.49 701.31,386.65 702.55,384.68 C703.79,382.72 704.77,380.59 705.68,378.45 C706.59,376.30 707.24,374.03 708.01,371.82 C708.78,369.61 709.64,367.42 710.29,365.18 C710.94,362.93 711.55,360.65 711.92,358.34 C712.30,356.04 712.50,353.69 712.52,351.35 C712.55,349.02 712.40,346.65 712.09,344.34 C711.78,342.03 711.31,339.70 710.64,337.47 C709.97,335.24 709.09,333.06 708.05,330.98 C707.00,328.90 705.62,326.97 704.37,324.99 C703.11,323.02 701.80,321.08 700.51,319.12 C699.21,317.17 697.98,315.18 696.62,313.28 C695.26,311.37 693.85,309.49 692.36,307.69 C690.87,305.89 689.35,304.09 687.66,302.48 C685.98,300.87 684.07,299.49 682.23,298.05 C680.39,296.61 678.47,295.25 676.62,293.82 C674.77,292.38 672.95,290.91 671.12,289.45 C669.29,287.99 667.49,286.48 665.64,285.06 C663.78,283.63 661.88,282.26 659.98,280.90 C658.08,279.53 656.14,278.22 654.22,276.88 C652.30,275.54 650.38,274.20 648.46,272.86 C646.54,271.52 644.63,270.15 642.70,268.84 C640.76,267.52 638.82,266.21 636.85,264.95 C634.88,263.68 632.87,262.48 630.88,261.24 C628.89,260.01 626.92,258.75 624.91,257.53 C622.91,256.32 620.90,255.11 618.87,253.96 C616.83,252.80 614.78,251.68 612.70,250.60 C610.63,249.52 608.53,248.47 606.42,247.46 C604.30,246.45 602.17,245.49 600.02,244.56 C597.88,243.62 595.35,243.15 593.54,241.86 C591.72,240.57 590.16,238.77 589.12,236.80 C588.08,234.83 588.02,232.28 587.30,230.06 C586.57,227.85 585.65,225.68 584.78,223.51 C583.91,221.33 582.99,219.18 582.08,217.02 C581.18,214.86 580.21,212.72 579.35,210.54 C578.50,208.37 577.72,206.16 576.95,203.95 C576.17,201.74 575.51,199.49 574.69,197.29 C573.87,195.10 572.96,192.95 572.03,190.81 C571.09,188.66 570.03,186.57 569.06,184.44 C568.09,182.30 567.12,180.18 566.21,178.02 C565.29,175.86 564.53,173.64 563.60,171.50 C562.68,169.35 561.75,167.20 560.66,165.13 C559.56,163.07 558.26,161.11 557.04,159.11 C555.81,157.12 554.54,155.15 553.31,153.16 C552.09,151.16 550.78,149.21 549.69,147.15 C548.60,145.08 547.75,142.88 546.78,140.75 C545.81,138.62 544.95,136.43 543.88,134.35 C542.81,132.27 541.67,130.22 540.38,128.28 C539.08,126.33 537.55,124.55 536.13,122.68 C534.71,120.82 533.28,118.97 531.85,117.11 C530.43,115.25 529.03,113.37 527.58,111.53 C526.13,109.69 524.68,107.86 523.16,106.08 C521.64,104.29 520.11,102.52 518.48,100.85 C516.84,99.18 515.10,97.60 513.35,96.04 C511.61,94.48 509.80,92.99 508.01,91.49 C506.21,89.99 504.40,88.51 502.58,87.02 C500.77,85.54 498.96,84.06 497.13,82.60 C495.30,81.13 493.50,79.63 491.62,78.24 C489.73,76.86 487.85,75.43 485.82,74.30 C483.78,73.16 481.55,72.37 479.41,71.43 C477.27,70.48 475.11,69.57 472.96,68.64 C470.81,67.71 468.68,66.73 466.51,65.85 C464.35,64.97 462.16,64.11 459.95,63.36 C457.73,62.62 455.48,61.95 453.21,61.37 C450.95,60.79 448.65,60.31 446.35,59.89 C444.05,59.47 441.72,59.16 439.40,58.86 C437.08,58.57 434.75,58.30 432.41,58.13 C430.08,57.96 427.74,57.86 425.40,57.85 C423.06,57.83 420.72,57.93 418.38,58.03 C416.04,58.14 413.70,58.31 411.36,58.46 C409.03,58.62 406.69,58.72 404.36,58.97 C402.03,59.22 399.73,59.65 397.41,59.99 C395.09,60.33 392.78,60.67 390.46,61.01 C388.14,61.35 385.82,61.66 383.51,62.03 C381.20,62.40 378.89,62.77 376.59,63.24 C374.30,63.71 372.04,64.33 369.76,64.86 C367.47,65.38 365.19,65.88 362.90,66.37 C360.61,66.85 358.31,67.30 356.01,67.77 C353.72,68.24 351.42,68.71 349.13,69.17 C346.83,69.64 344.54,70.13 342.25,70.58 C339.95,71.03 337.64,71.44 335.34,71.87 C333.04,72.30 330.73,72.69 328.43,73.15 C326.14,73.62 323.87,74.19 321.57,74.66 C319.28,75.13 316.98,75.56 314.67,75.96 C312.37,76.37 310.05,76.70 307.74,77.09 C305.43,77.47 303.12,77.87 300.81,78.28 C298.51,78.70 296.22,79.18 293.91,79.58 C291.60,79.98 289.29,80.38 286.97,80.67 C284.65,80.95 282.31,81.13 279.97,81.29 C277.64,81.45 275.30,81.52 272.96,81.63 C270.62,81.75 268.28,81.86 265.94,81.97 C263.60,82.08 261.26,82.18 258.92,82.30 C256.59,82.42 254.21,82.36 251.91,82.71 C249.61,83.05 247.16,83.39 245.12,84.37 C243.08,85.35 241.22,86.92 239.67,88.60 C238.13,90.28 237.00,92.45 235.85,94.48 C234.69,96.51 233.70,98.65 232.75,100.78 C231.79,102.92 230.93,105.10 230.11,107.29 C229.29,109.49 228.53,111.70 227.83,113.94 C227.14,116.17 226.56,118.45 225.94,120.70 C225.31,122.96 224.69,125.22 224.07,127.47 C223.44,129.73 222.77,131.98 222.20,134.25 C221.62,136.52 221.15,138.81 220.62,141.09 C220.10,143.38 219.52,145.65 219.05,147.94 C218.58,150.23 218.17,152.54 217.78,154.85 C217.40,157.16 217.06,159.47 216.75,161.79 C216.44,164.12 216.21,166.45 215.94,168.77 C215.67,171.10 215.40,173.42 215.14,175.75 C214.87,178.08 214.61,180.41 214.37,182.73 C214.13,185.06 213.92,187.40 213.70,189.73 C213.48,192.06 213.25,194.39 213.03,196.72 C212.81,199.05 212.65,201.39 212.36,203.71Z" fill="none" stroke="#8e8e8e" stroke-width="4.6" stroke-linejoin="round"/>
    </g>
    <g stroke="none">
      <path d="M258,113.5 L269,107 L288,104 L308.7,104 L329.3,105.4 L349.8,109 L370,113.5 L385,119.4 L420,130 L455,142 L472,152.7 L472.4,156 L455,154.4 L420,148.3 L385,141.3 L370,138.5 L338,132.6 L308.7,125.2 L279.4,119.4 Z" fill="#dfeaf2" fill-opacity="0.3"/>
      <path d="M258.7,158 L285,172.7 L320,187.6 L355,197.2 L383.7,200.8 L453.6,201.7 L418.7,224.4 L387.2,236.7 L355,237.4 L323.4,228.7 L302.4,218.2 L285,200.7 L267.4,176.2 Z" fill="#e6fbff" fill-opacity="0.22"/>
      <path d="M311,86 L350,95 L385,103.7 L420,112.4 L455,119.4 L481,122 L495,113 L507,112 L506,117 L492,122 L481,127 L450,123 L420,117 L380,108 L340,99 L300,88 Z" fill="#e6fbff" fill-opacity="0.25"/>
    </g>
    <g fill="none" stroke="#1f7fa6" stroke-width="1" stroke-linejoin="round" stroke-linecap="round" opacity="0.9">
      <!-- crown travel stitches -->
      <path d="M262,98 L251.5,107.7 L248,116.5 L248,135.7 L241,146.2 L242.7,169 L248.2,180.6 L248.2,220 L220.2,251.4"/>
      <path d="M248.2,180.6 L262,167 L259.3,158.4"/>
      <path d="M248,116.5 L267,145.3 L276,140 L290,153.2 L297,147 L304,153.2 L311,147 L318,153.2 L325,147 L332,153.2 L339,147 L346,153.2 L353,147 L360,153.2 L367,147 L374,153.2 L381,147 L388,153.2 L395,147 L402,153.2 L409,147 L414.7,153.5"/>
      <path d="M290.8,104 L281,125 L277.7,134 L269,146 L259.3,158.4"/>
      <path d="M262,98 L268,104 L274,97 L281,91 L286.4,90 L291.7,96.4 L297,89.4 L304,96.4 L309,90 L311,86"/>
      <path d="M350,75.7 L371,72.2 L385,82.7 L416.4,83.6 L423.4,89.7 L451.4,90.6 L458.4,96.7 L490,97.6"/>
      <path d="M427,67 L424.3,76.6 L429.5,82.7 L427.8,89.7 L430.4,95 L423.4,107.2 L425.2,112.4"/>
      <path d="M465.2,128.7 L477.5,145.3 L486.2,139.2 L493.2,146.2 L507.2,132.2 L513.3,137.4 L500.2,152.3 L512.4,167.2 L506.3,174.2 L513.3,182 L506.3,190 L513.8,196.2"/>
      <path d="M507.2,132.2 L521.2,117.3 L500.2,99 L491.5,102.5 L481,122"/>
      <path d="M513.8,196.2 L450,257.4 L436,258.5 L431,263.8 L388,264.7"/>
      <path d="M513.8,196.2 L561.9,241.7 L582.9,243.4"/>
      <path d="M248.2,209.4 L272.7,239.2 L299,256.6"/>
      <path d="M243,230.4 L248.2,235.7 L255.2,229.5 L269.2,242.7 L275.3,237.4 L285,248 L290.2,251.4 L297.2,245.3 L304.2,251.4 L311.2,245.3 L318.2,251.4 L325.2,244.4 L332.2,250.5 L339.2,244.4 L346.2,250.5 L354,243.7 L360,250.7 L366.2,243.7 L366.2,238.4 L340,212.2"/>
      <path d="M220.2,244.4 L279.7,243.5"/>
      <path d="M299,256.6 L340,266.4 L347,265.5 L353,271.6 L360,265.5 L367,271.6 L374,265.5 L381,271.6 L388,264.7 L415,300"/>
      <!-- brim travel stitches -->
      <path d="M218,227 L207,227 L207,246 L200,246 L197.5,250 L197.5,256 L187.5,256 L187.5,267.5 L167.5,287.5 L167.5,332.5 L143.75,350 L133.75,361.25 L215,364.5 L216,374 L235,374 L236,384.5 L275,384.5 L276,394 L312.5,394 L315,404.5 L492.5,404.5 L502.5,394.5 L551,394 L551,385 L580,385 L581,374 L670,374 L680,385 L690,385"/>
      <path d="M160,256 L197.5,256 L197.5,286 L205,286 L205,300"/>
      <path d="M215.5,222 L215.5,256 L147.5,350 L147.5,363"/>
      <path d="M206.5,300 L206.5,364"/>
      <path d="M662.5,292.5 L657.5,307.5 L615,350 L581,374"/>
      <path d="M287.5,345 L287.5,354 L297,354 L297,345"/>
      <path d="M226,322 L228,332 L234,327"/>
    </g>
    <g fill="none" stroke="#35aac8" stroke-width="1" stroke-linejoin="round" opacity="0.9">
      <!-- light cyan crease outlines -->
      <path d="M311,86 L350,95 L385,103.7 L420,112.4 L455,119.4 L481,122 L495,113 L507,112 L506,117 L492,122 L481,127 L475,132"/>
      <path d="M300,88 L340,99 L380,108 L420,117 L450,123 L444.4,126.4 L449.7,131.7 L456.6,124.7 L463.6,119.4 L470.6,124.7 L477.6,131.7 L486.4,124.7"/>
      <path d="M258.7,158 L285,172.7 L320,187.6 L355,197.2 L383.7,200.8 L453.6,201.7 L418.7,224.4 L387.2,236.7 L381,242.8"/>
      <path d="M258.7,158 L285,185 L302.4,195.5 L323.4,206 L355,220 L380,224 L401.2,216.6 L448.4,204.3"/>
      <path d="M258.7,158 L267.4,176.2 L285,200.7 L302.4,218.2 L323.4,228.7 L355,237.4 L380,236.7"/>
    </g>
    <g fill="none" stroke="#1c5fa6" stroke-width="1" stroke-linejoin="round" opacity="0.95">
      <!-- dark blue upper crease -->
      <path d="M258.0,113.5 L269.0,107.0 L288.0,104.0 L308.7,104.0 L329.3,105.4 L349.8,109.0 L370.0,113.5 L385.0,119.4 L420.0,130.0 L455.0,142.0 L472.0,152.7" stroke="#1f7fa6"/>
      <path d="M258.0,113.5 L279.4,119.4 L308.7,125.2 L338.0,132.6 L370.0,138.5 L385.0,141.3 L420.0,148.3 L455.0,154.4 L472.4,156.0" stroke-dasharray="7 2"/>
      <path d="M268.0,108.4 L271.4,112.5 L274.8,108.1 L278.2,112.5 L281.6,108.0 L285.0,112.3 L288.4,107.8 L291.8,112.4 L295.2,108.3 L298.6,112.9 L302.0,108.8 L305.4,113.4 L308.8,109.3 L312.2,114.1 L315.6,110.1 L319.0,115.0 L322.4,111.0 L325.8,115.9 L329.2,112.0 L332.6,117.0 L336.0,113.3 L339.4,118.4 L342.8,114.6 L346.2,119.6 L349.6,115.8 L353.0,120.9 L356.4,117.2 L359.8,122.3 L363.2,118.6 L366.6,123.7 L370.0,120.0 L373.4,125.5 L376.8,122.2 L380.2,127.7 L383.6,124.4 L387.0,129.8 L390.4,126.3 L393.8,131.6 L397.2,128.1 L400.6,133.4 L404.0,129.9 L407.4,135.2 L410.8,131.7 L414.2,137.1 L417.6,133.6 L421.0,138.9 L424.4,135.5 L427.8,140.8 L431.2,137.4 L434.6,142.7 L438.0,139.3 L441.4,144.7 L444.8,141.2 L448.2,146.6 L451.6,143.2 L455.0,148.6 L458.4,145.6 L461.8,151.5 L465.2,148.6 L468.6,154.5"/>
      <path d="M296.0,112.7 L299.4,108.6 L302.8,113.2 L306.2,109.0 L309.6,113.7 L313.0,109.8 L316.4,114.6 L319.8,110.7 L323.2,115.5"/>
      <path d="M272.0,111.9 L275.4,116.4 L278.8,112.8 L282.2,117.1 L285.6,113.4 L289.0,117.8 L292.4,114.2 L295.8,118.7 L299.2,115.1 L302.6,119.6 L306.0,116.1 L309.4,120.6 L312.8,117.2 L316.2,121.9 L319.6,118.5 L323.0,123.2 L326.4,119.8 L329.8,124.5 L333.2,121.3 L336.6,126.1 L340.0,122.7 L343.4,127.4 L346.8,124.0 L350.2,128.6 L353.6,125.3 L357.0,129.9 L360.4,126.6 L363.8,131.3 L367.2,127.9 L370.6,132.7 L374.0,129.5 L377.4,134.4 L380.8,131.2 L384.2,136.1 L387.6,132.9 L391.0,137.7 L394.4,134.5 L397.8,139.3 L401.2,136.1 L404.6,140.9 L408.0,137.6 L411.4,142.4 L414.8,139.2 L418.2,144.0 L421.6,140.8 L425.0,145.6 L428.4,142.4 L431.8,147.1 L435.2,143.9 L438.6,148.7 L442.0,145.5 L445.4,150.2 L448.8,147.0 L452.2,151.8 L455.6,148.6 L459.0,153.5 L462.4,150.4 L465.8,155.3 L469.2,152.2"/>
      <path d="M466,150 L472,152 L476,160 L470,157 L468,154"/>
    </g>
    <g fill="none" stroke="#111" stroke-width="1" stroke-linejoin="round">
      <!-- black travel stitches in band -->
      <path d="M214,262 L222,262 L217,258 M217,263 L262,307 L300,317.5 L311,313 L326,327 L331,320.6 L340,327 L347,320.6 L353.75,327.5 L360.6,320 L374.4,334.4 L381.25,327.5 L400,345.6 L402,355"/>
      <path d="M400,327.25 L448.75,326.9 L457.5,320.25 L486.25,320 L492.5,313.75 L520,313.75 L526.25,307.5 L541.25,306.25 L582.5,263.75"/>
      <path d="M577,272 L577,283.75 L585,293.75 M577.5,273 L587,281"/>
      <path d="M527.5,292 L535,285.6 L532,282"/>
      <path d="M698,378.75 L708,385" stroke-width="1.5"/>
      <!-- needle mark -->
      <path d="M205,210 L213,213 M209,207 L210,219 M212,211 L216,218 M206,214 L214,209" stroke-width="1.3"/>
    </g>

    <!-- scale bar -->
    <path d="M28.5,446 V452.5 H82.5 V447 M55.5,449 V452.5" fill="none" stroke="#555" stroke-width="1"/>
    <text x="27.3" y="472.8" font-family="Liberation Sans, sans-serif" font-size="16.9" fill="#111">11 mm</text>
  </g>
</svg>
</body>
</html>
